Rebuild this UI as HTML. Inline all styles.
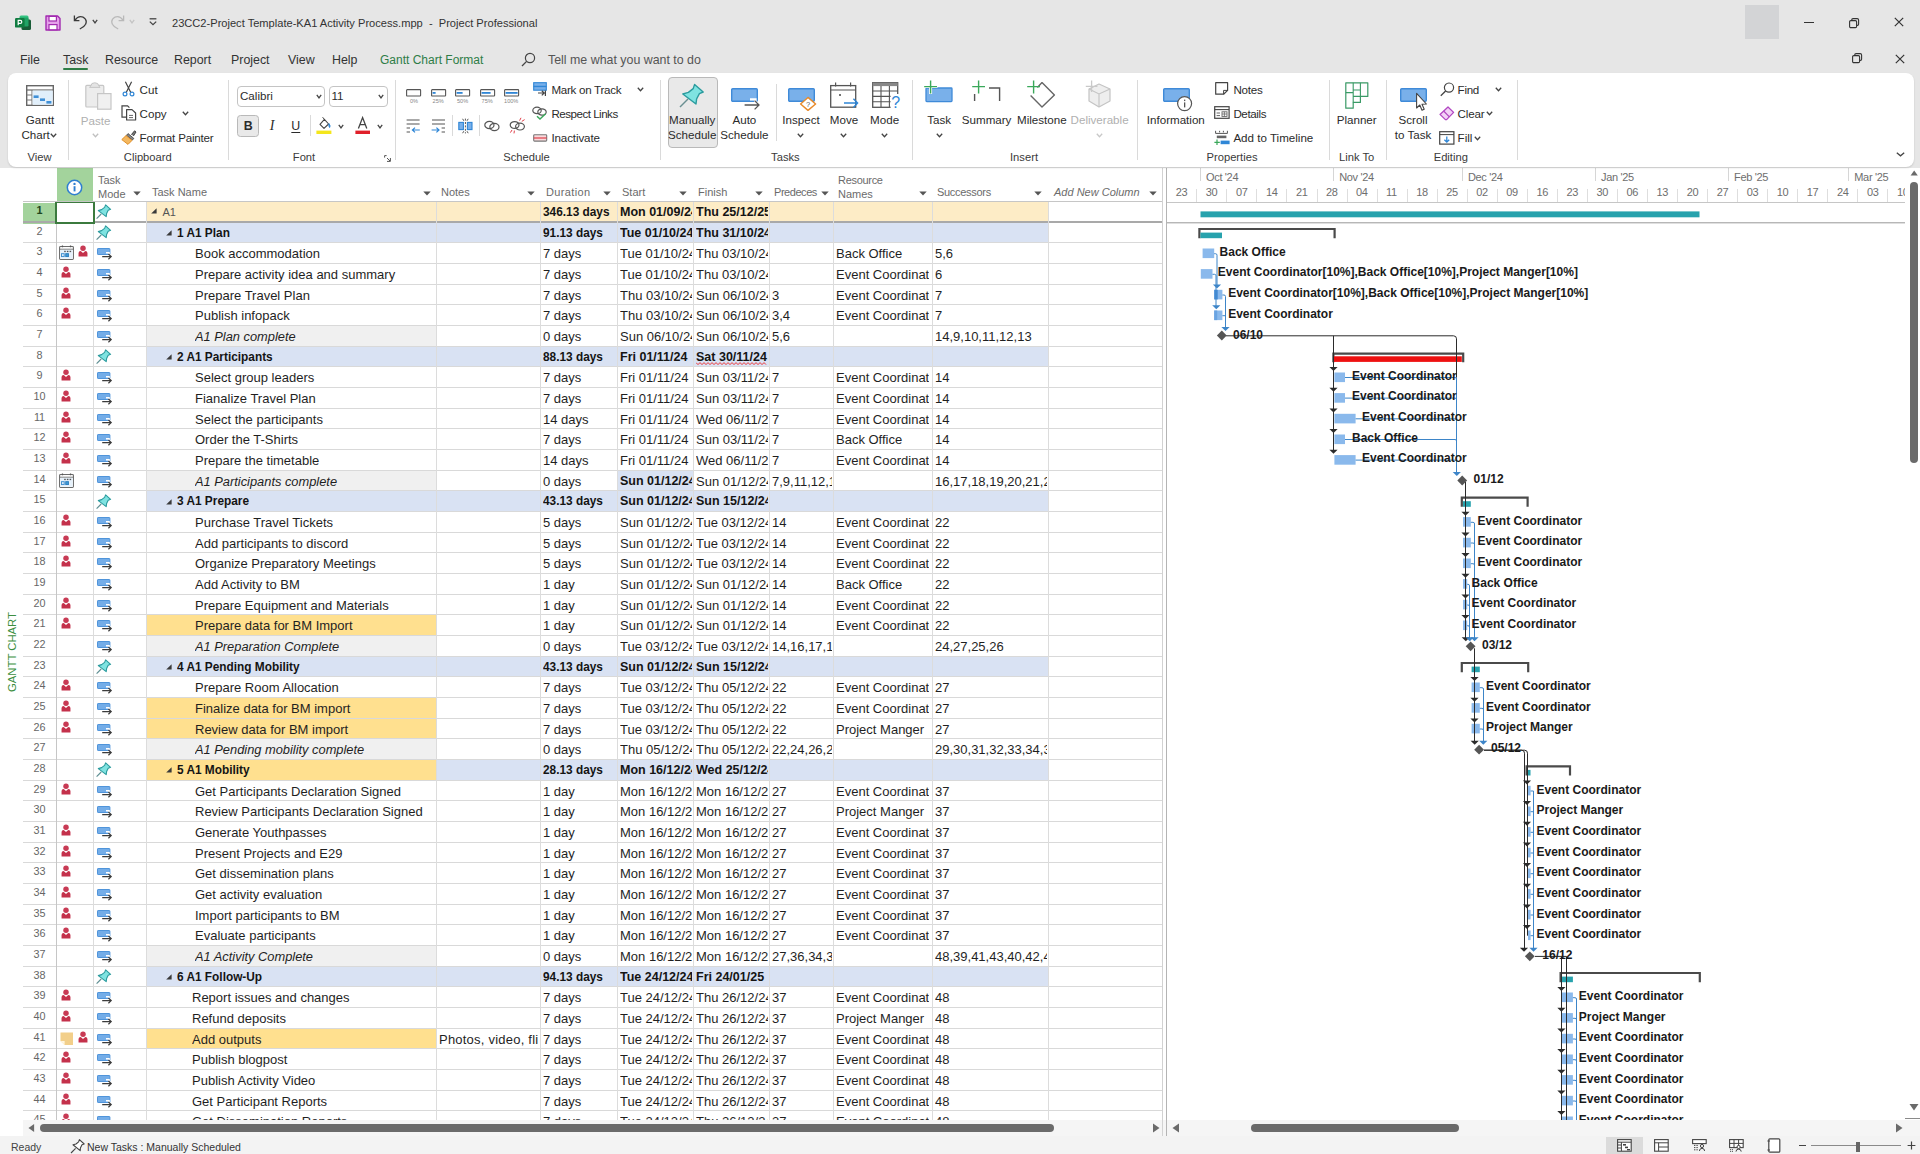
<!DOCTYPE html>
<html><head><meta charset="utf-8"><title>Project</title><style>
html,body{margin:0;padding:0}
body{width:1920px;height:1154px;overflow:hidden;position:relative;background:#fff;font-family:"Liberation Sans",sans-serif;color:#262626}
div,svg{box-sizing:border-box}
.abs,.bg,.ic,.c,.h,.hl,.vl,.ts,.t{position:absolute}
.c{height:20.67px;line-height:21.4px;font-size:13px;white-space:nowrap;overflow:hidden;color:#1f1f1f}
.c.b{font-weight:bold;font-size:11.85px;color:#141414}
.c.bd{font-weight:bold;font-size:12.5px;color:#141414}
.c.i{font-style:italic;font-size:12.85px}
.c.top{font-size:11px;color:#555}
.c.num{text-align:center;color:#666;font-size:10.8px;line-height:17.4px}
.h{font-size:11px;color:#6b6b6b;white-space:nowrap;line-height:14px}
.h.i{font-style:italic}
.hl{height:1px;background:#d9d9d9}
.vl{top:168px;width:1px;height:952px;background:#dcdcdc}
.ts{font-size:11px;color:#6e6e6e;white-space:nowrap;line-height:12px;letter-spacing:-0.35px}
.sq{text-decoration:underline wavy #e02020 1px;text-underline-offset:2px}
.t{white-space:nowrap;font-size:12px;color:#2b2b2b;line-height:14px}
.rl{position:absolute;font-size:11.6px;color:#2b2b2b;white-space:nowrap;line-height:14px}
.rc{position:absolute;font-size:11.6px;color:#2b2b2b;white-space:nowrap;line-height:14.6px;text-align:center;transform:translateX(-50%)}
.gl{position:absolute;font-size:11.2px;color:#3a3a3a;white-space:nowrap;line-height:13px;transform:translateX(-50%)}
.dis{color:#b0b0b0}
.sep{position:absolute;top:80px;width:1px;height:80px;background:#dadada}
</style></head>
<body>
<div class="bg" style="left:146px;top:202.0px;width:902px;height:20.667px;background:#fdecc6"></div>
<div class="bg" style="left:23px;top:203.0px;width:33px;height:20.667px;background:#a3d39c"></div>
<div class="c num" style="left:23px;top:202.0px;width:33px;color:#1e4620;font-weight:bold">1</div>
<svg class="ic" style="left:96px;top:204.2px" width="16" height="16" viewBox="0 0 16 16"><path d="M0.6 14.6 L5.2 10" stroke="#5f8f93" stroke-width="1.2" fill="none"/><path d="M9.6 0.9 L14.6 5.3 L12.2 6.3 L10.6 9.6 L10.2 12.6 L2.3 6.6 L5.6 5.6 L8.6 3.4 Z" fill="#7fe3e1" stroke="#2b9b9e" stroke-width="1.1" stroke-linejoin="round"/></svg>
<svg class="ic" style="left:150.6px;top:208.0px" width="6" height="6" viewBox="0 0 6 6"><path d="M5.6 0.2 V5.6 H0.2 Z" fill="#3a3a3a"/></svg>
<div class="c top" style="left:162.4px;top:202.0px;width:272.6px">A1</div>
<div class="c b" style="left:543px;top:202.0px;width:73px">346.13 days</div>
<div class="c bd" style="left:620px;top:202.0px;width:72px">Mon 01/09/24</div>
<div class="c bd" style="left:696px;top:202.0px;width:72px">Thu 25/12/25</div>
<div class="bg" style="left:146px;top:222.67px;width:902px;height:20.667px;background:#d9e2f3"></div>
<div class="bg" style="left:94px;top:223.67px;width:52px;height:18.667px;background:#fff"></div>
<div class="c num" style="left:23px;top:222.67px;width:33px">2</div>
<svg class="ic" style="left:96px;top:224.9px" width="16" height="16" viewBox="0 0 16 16"><path d="M0.6 14.6 L5.2 10" stroke="#5f8f93" stroke-width="1.2" fill="none"/><path d="M9.6 0.9 L14.6 5.3 L12.2 6.3 L10.6 9.6 L10.2 12.6 L2.3 6.6 L5.6 5.6 L8.6 3.4 Z" fill="#7fe3e1" stroke="#2b9b9e" stroke-width="1.1" stroke-linejoin="round"/></svg>
<svg class="ic" style="left:165.6px;top:229.9px" width="6" height="6" viewBox="0 0 6 6"><path d="M5.6 0.2 V5.6 H0.2 Z" fill="#3a3a3a"/></svg>
<div class="c b" style="left:177px;top:222.67px;width:258px">1 A1 Plan</div>
<div class="c b" style="left:543px;top:222.67px;width:73px">91.13 days</div>
<div class="c bd" style="left:620px;top:222.67px;width:72px">Tue 01/10/24</div>
<div class="c bd" style="left:696px;top:222.67px;width:72px">Thu 31/10/24</div>
<div class="c num" style="left:23px;top:243.33px;width:33px">3</div>
<svg class="ic" style="left:58.6px;top:245.1px" width="15.4" height="15.4" viewBox="0 0 16 16"><rect x="0.6" y="1.6" width="14.4" height="13.4" rx="1" fill="#fff" stroke="#6a6a6a" stroke-width="1.1"/><path d="M0.6 4.4 H15" stroke="#6a6a6a" stroke-width="1"/><path d="M3.6 0.4 V2.4 M12 0.4 V2.4" stroke="#555" stroke-width="1.3"/><rect x="1.4" y="5" width="12.8" height="9.2" fill="#e6f1fb"/><rect x="5.4" y="6" width="1.6" height="1.4" fill="#555"/><rect x="8.2" y="6" width="1.6" height="1.4" fill="#555"/><rect x="11" y="6" width="1.6" height="1.4" fill="#555"/><rect x="2.6" y="9" width="2.8" height="3" fill="#dbeaf8" stroke="#3f8fd0" stroke-width="1"/><rect x="7" y="9" width="2.8" height="3" fill="#3f9ad6" stroke="#2c7fc0" stroke-width="1"/></svg>
<svg class="ic" style="left:78px;top:245.3px" width="10" height="12.4" viewBox="0 0 11 13"><circle cx="5.5" cy="3.2" r="3" fill="#c83a54"/><path d="M0.6 12.4 L0.6 8.6 Q0.6 6.6 3 6.4 L5.5 8.6 L8 6.4 Q10.4 6.6 10.4 8.6 L10.4 12.4 Z" fill="#c4314b"/></svg>
<svg class="ic" style="left:97px;top:248.1px" width="16" height="12" viewBox="0 0 16 12"><rect x="0.5" y="0.5" width="12.4" height="6" rx="0.6" fill="#74ade8" stroke="#4f94da" stroke-width="1"/><path d="M9 4.8 L12 4.8 L12 6.4" fill="none" stroke="#fff" stroke-width="1.5"/><path d="M5.2 8.6 L14 8.6 M11.4 6 L14.2 8.6 L11.4 11.2" fill="none" stroke="#3b3b3b" stroke-width="1.2"/></svg>

<div class="c " style="left:195px;top:243.33px;width:240px">Book accommodation</div>
<div class="c" style="left:543px;top:243.33px;width:73px">7 days</div>
<div class="c" style="left:620px;top:243.33px;width:72px">Tue 01/10/24</div>
<div class="c" style="left:696px;top:243.33px;width:72px">Thu 03/10/24</div>
<div class="c" style="left:836px;top:243.33px;width:92.8px">Back Office</div>
<div class="c" style="left:935px;top:243.33px;width:112px">5,6</div>
<div class="c num" style="left:23px;top:264.0px;width:33px">4</div>
<svg class="ic" style="left:61px;top:266.0px" width="10" height="12.4" viewBox="0 0 11 13"><circle cx="5.5" cy="3.2" r="3" fill="#c83a54"/><path d="M0.6 12.4 L0.6 8.6 Q0.6 6.6 3 6.4 L5.5 8.6 L8 6.4 Q10.4 6.6 10.4 8.6 L10.4 12.4 Z" fill="#c4314b"/></svg>
<svg class="ic" style="left:97px;top:268.8px" width="16" height="12" viewBox="0 0 16 12"><rect x="0.5" y="0.5" width="12.4" height="6" rx="0.6" fill="#74ade8" stroke="#4f94da" stroke-width="1"/><path d="M9 4.8 L12 4.8 L12 6.4" fill="none" stroke="#fff" stroke-width="1.5"/><path d="M5.2 8.6 L14 8.6 M11.4 6 L14.2 8.6 L11.4 11.2" fill="none" stroke="#3b3b3b" stroke-width="1.2"/></svg>

<div class="c " style="left:195px;top:264.0px;width:240px">Prepare activity idea and summary</div>
<div class="c" style="left:543px;top:264.0px;width:73px">7 days</div>
<div class="c" style="left:620px;top:264.0px;width:72px">Tue 01/10/24</div>
<div class="c" style="left:696px;top:264.0px;width:72px">Thu 03/10/24</div>
<div class="c" style="left:836px;top:264.0px;width:92.8px">Event Coordinator</div>
<div class="c" style="left:935px;top:264.0px;width:112px">6</div>
<div class="c num" style="left:23px;top:284.67px;width:33px">5</div>
<svg class="ic" style="left:61px;top:286.7px" width="10" height="12.4" viewBox="0 0 11 13"><circle cx="5.5" cy="3.2" r="3" fill="#c83a54"/><path d="M0.6 12.4 L0.6 8.6 Q0.6 6.6 3 6.4 L5.5 8.6 L8 6.4 Q10.4 6.6 10.4 8.6 L10.4 12.4 Z" fill="#c4314b"/></svg>
<svg class="ic" style="left:97px;top:289.5px" width="16" height="12" viewBox="0 0 16 12"><rect x="0.5" y="0.5" width="12.4" height="6" rx="0.6" fill="#74ade8" stroke="#4f94da" stroke-width="1"/><path d="M9 4.8 L12 4.8 L12 6.4" fill="none" stroke="#fff" stroke-width="1.5"/><path d="M5.2 8.6 L14 8.6 M11.4 6 L14.2 8.6 L11.4 11.2" fill="none" stroke="#3b3b3b" stroke-width="1.2"/></svg>

<div class="c " style="left:195px;top:284.67px;width:240px">Prepare Travel Plan</div>
<div class="c" style="left:543px;top:284.67px;width:73px">7 days</div>
<div class="c" style="left:620px;top:284.67px;width:72px">Thu 03/10/24</div>
<div class="c" style="left:696px;top:284.67px;width:72px">Sun 06/10/24</div>
<div class="c" style="left:772px;top:284.67px;width:60px">3</div>
<div class="c" style="left:836px;top:284.67px;width:92.8px">Event Coordinator</div>
<div class="c" style="left:935px;top:284.67px;width:112px">7</div>
<div class="c num" style="left:23px;top:305.34px;width:33px">6</div>
<svg class="ic" style="left:61px;top:307.3px" width="10" height="12.4" viewBox="0 0 11 13"><circle cx="5.5" cy="3.2" r="3" fill="#c83a54"/><path d="M0.6 12.4 L0.6 8.6 Q0.6 6.6 3 6.4 L5.5 8.6 L8 6.4 Q10.4 6.6 10.4 8.6 L10.4 12.4 Z" fill="#c4314b"/></svg>
<svg class="ic" style="left:97px;top:310.1px" width="16" height="12" viewBox="0 0 16 12"><rect x="0.5" y="0.5" width="12.4" height="6" rx="0.6" fill="#74ade8" stroke="#4f94da" stroke-width="1"/><path d="M9 4.8 L12 4.8 L12 6.4" fill="none" stroke="#fff" stroke-width="1.5"/><path d="M5.2 8.6 L14 8.6 M11.4 6 L14.2 8.6 L11.4 11.2" fill="none" stroke="#3b3b3b" stroke-width="1.2"/></svg>

<div class="c " style="left:195px;top:305.34px;width:240px">Publish infopack</div>
<div class="c" style="left:543px;top:305.34px;width:73px">7 days</div>
<div class="c" style="left:620px;top:305.34px;width:72px">Thu 03/10/24</div>
<div class="c" style="left:696px;top:305.34px;width:72px">Sun 06/10/24</div>
<div class="c" style="left:772px;top:305.34px;width:60px">3,4</div>
<div class="c" style="left:836px;top:305.34px;width:92.8px">Event Coordinator</div>
<div class="c" style="left:935px;top:305.34px;width:112px">7</div>
<div class="bg" style="left:146px;top:326.0px;width:290px;height:20.667px;background:#f0f0f0"></div>
<div class="c num" style="left:23px;top:326.0px;width:33px">7</div>
<svg class="ic" style="left:97px;top:330.8px" width="16" height="12" viewBox="0 0 16 12"><rect x="0.5" y="0.5" width="12.4" height="6" rx="0.6" fill="#74ade8" stroke="#4f94da" stroke-width="1"/><path d="M9 4.8 L12 4.8 L12 6.4" fill="none" stroke="#fff" stroke-width="1.5"/><path d="M5.2 8.6 L14 8.6 M11.4 6 L14.2 8.6 L11.4 11.2" fill="none" stroke="#3b3b3b" stroke-width="1.2"/></svg>

<div class="c i" style="left:195px;top:326.0px;width:240px">A1 Plan complete</div>
<div class="c" style="left:543px;top:326.0px;width:73px">0 days</div>
<div class="c" style="left:620px;top:326.0px;width:72px">Sun 06/10/24</div>
<div class="c" style="left:696px;top:326.0px;width:72px">Sun 06/10/24</div>
<div class="c" style="left:772px;top:326.0px;width:60px">5,6</div>
<div class="c" style="left:935px;top:326.0px;width:112px">14,9,10,11,12,13</div>
<div class="bg" style="left:146px;top:346.67px;width:902px;height:20.667px;background:#d9e2f3"></div>
<div class="bg" style="left:94px;top:347.67px;width:52px;height:18.667px;background:#fff"></div>
<div class="c num" style="left:23px;top:346.67px;width:33px">8</div>
<svg class="ic" style="left:96px;top:348.9px" width="16" height="16" viewBox="0 0 16 16"><path d="M0.6 14.6 L5.2 10" stroke="#5f8f93" stroke-width="1.2" fill="none"/><path d="M9.6 0.9 L14.6 5.3 L12.2 6.3 L10.6 9.6 L10.2 12.6 L2.3 6.6 L5.6 5.6 L8.6 3.4 Z" fill="#7fe3e1" stroke="#2b9b9e" stroke-width="1.1" stroke-linejoin="round"/></svg>
<svg class="ic" style="left:165.6px;top:353.9px" width="6" height="6" viewBox="0 0 6 6"><path d="M5.6 0.2 V5.6 H0.2 Z" fill="#3a3a3a"/></svg>
<div class="c b" style="left:177px;top:346.67px;width:258px">2 A1 Participants</div>
<div class="c b" style="left:543px;top:346.67px;width:73px">88.13 days</div>
<div class="c bd" style="left:620px;top:346.67px;width:72px">Fri 01/11/24</div>
<div class="c bd" style="left:696px;top:346.67px;width:72px">Sat 30/11/24</div>
<svg class="ic" style="left:696px;top:361.5px" width="71" height="4" viewBox="0 0 71 4"><path d="M0 0.6 L2 2.6 L4 0.6 L6 2.6 L8 0.6 L10 2.6 L12 0.6 L14 2.6 L16 0.6 L18 2.6 L20 0.6 L22 2.6 L24 0.6 L26 2.6 L28 0.6 L30 2.6 L32 0.6 L34 2.6 L36 0.6 L38 2.6 L40 0.6 L42 2.6 L44 0.6 L46 2.6 L48 0.6 L50 2.6 L52 0.6 L54 2.6 L56 0.6 L58 2.6 L60 0.6 L62 2.6 L64 0.6 L66 2.6 L68 0.6 L70 2.6" fill="none" stroke="#e22" stroke-width="0.9"/></svg>
<div class="c num" style="left:23px;top:367.34px;width:33px">9</div>
<svg class="ic" style="left:61px;top:369.3px" width="10" height="12.4" viewBox="0 0 11 13"><circle cx="5.5" cy="3.2" r="3" fill="#c83a54"/><path d="M0.6 12.4 L0.6 8.6 Q0.6 6.6 3 6.4 L5.5 8.6 L8 6.4 Q10.4 6.6 10.4 8.6 L10.4 12.4 Z" fill="#c4314b"/></svg>
<svg class="ic" style="left:97px;top:372.1px" width="16" height="12" viewBox="0 0 16 12"><rect x="0.5" y="0.5" width="12.4" height="6" rx="0.6" fill="#74ade8" stroke="#4f94da" stroke-width="1"/><path d="M9 4.8 L12 4.8 L12 6.4" fill="none" stroke="#fff" stroke-width="1.5"/><path d="M5.2 8.6 L14 8.6 M11.4 6 L14.2 8.6 L11.4 11.2" fill="none" stroke="#3b3b3b" stroke-width="1.2"/></svg>

<div class="c " style="left:195px;top:367.34px;width:240px">Select group leaders</div>
<div class="c" style="left:543px;top:367.34px;width:73px">7 days</div>
<div class="c" style="left:620px;top:367.34px;width:72px">Fri 01/11/24</div>
<div class="c" style="left:696px;top:367.34px;width:72px">Sun 03/11/24</div>
<div class="c" style="left:772px;top:367.34px;width:60px">7</div>
<div class="c" style="left:836px;top:367.34px;width:92.8px">Event Coordinator</div>
<div class="c" style="left:935px;top:367.34px;width:112px">14</div>
<div class="c num" style="left:23px;top:388.0px;width:33px">10</div>
<svg class="ic" style="left:61px;top:390.0px" width="10" height="12.4" viewBox="0 0 11 13"><circle cx="5.5" cy="3.2" r="3" fill="#c83a54"/><path d="M0.6 12.4 L0.6 8.6 Q0.6 6.6 3 6.4 L5.5 8.6 L8 6.4 Q10.4 6.6 10.4 8.6 L10.4 12.4 Z" fill="#c4314b"/></svg>
<svg class="ic" style="left:97px;top:392.8px" width="16" height="12" viewBox="0 0 16 12"><rect x="0.5" y="0.5" width="12.4" height="6" rx="0.6" fill="#74ade8" stroke="#4f94da" stroke-width="1"/><path d="M9 4.8 L12 4.8 L12 6.4" fill="none" stroke="#fff" stroke-width="1.5"/><path d="M5.2 8.6 L14 8.6 M11.4 6 L14.2 8.6 L11.4 11.2" fill="none" stroke="#3b3b3b" stroke-width="1.2"/></svg>

<div class="c " style="left:195px;top:388.0px;width:240px">Fianalize Travel Plan</div>
<div class="c" style="left:543px;top:388.0px;width:73px">7 days</div>
<div class="c" style="left:620px;top:388.0px;width:72px">Fri 01/11/24</div>
<div class="c" style="left:696px;top:388.0px;width:72px">Sun 03/11/24</div>
<div class="c" style="left:772px;top:388.0px;width:60px">7</div>
<div class="c" style="left:836px;top:388.0px;width:92.8px">Event Coordinator</div>
<div class="c" style="left:935px;top:388.0px;width:112px">14</div>
<div class="c num" style="left:23px;top:408.67px;width:33px">11</div>
<svg class="ic" style="left:61px;top:410.7px" width="10" height="12.4" viewBox="0 0 11 13"><circle cx="5.5" cy="3.2" r="3" fill="#c83a54"/><path d="M0.6 12.4 L0.6 8.6 Q0.6 6.6 3 6.4 L5.5 8.6 L8 6.4 Q10.4 6.6 10.4 8.6 L10.4 12.4 Z" fill="#c4314b"/></svg>
<svg class="ic" style="left:97px;top:413.5px" width="16" height="12" viewBox="0 0 16 12"><rect x="0.5" y="0.5" width="12.4" height="6" rx="0.6" fill="#74ade8" stroke="#4f94da" stroke-width="1"/><path d="M9 4.8 L12 4.8 L12 6.4" fill="none" stroke="#fff" stroke-width="1.5"/><path d="M5.2 8.6 L14 8.6 M11.4 6 L14.2 8.6 L11.4 11.2" fill="none" stroke="#3b3b3b" stroke-width="1.2"/></svg>

<div class="c " style="left:195px;top:408.67px;width:240px">Select the participants</div>
<div class="c" style="left:543px;top:408.67px;width:73px">14 days</div>
<div class="c" style="left:620px;top:408.67px;width:72px">Fri 01/11/24</div>
<div class="c" style="left:696px;top:408.67px;width:72px">Wed 06/11/24</div>
<div class="c" style="left:772px;top:408.67px;width:60px">7</div>
<div class="c" style="left:836px;top:408.67px;width:92.8px">Event Coordinator</div>
<div class="c" style="left:935px;top:408.67px;width:112px">14</div>
<div class="c num" style="left:23px;top:429.34px;width:33px">12</div>
<svg class="ic" style="left:61px;top:431.3px" width="10" height="12.4" viewBox="0 0 11 13"><circle cx="5.5" cy="3.2" r="3" fill="#c83a54"/><path d="M0.6 12.4 L0.6 8.6 Q0.6 6.6 3 6.4 L5.5 8.6 L8 6.4 Q10.4 6.6 10.4 8.6 L10.4 12.4 Z" fill="#c4314b"/></svg>
<svg class="ic" style="left:97px;top:434.1px" width="16" height="12" viewBox="0 0 16 12"><rect x="0.5" y="0.5" width="12.4" height="6" rx="0.6" fill="#74ade8" stroke="#4f94da" stroke-width="1"/><path d="M9 4.8 L12 4.8 L12 6.4" fill="none" stroke="#fff" stroke-width="1.5"/><path d="M5.2 8.6 L14 8.6 M11.4 6 L14.2 8.6 L11.4 11.2" fill="none" stroke="#3b3b3b" stroke-width="1.2"/></svg>

<div class="c " style="left:195px;top:429.34px;width:240px">Order the T-Shirts</div>
<div class="c" style="left:543px;top:429.34px;width:73px">7 days</div>
<div class="c" style="left:620px;top:429.34px;width:72px">Fri 01/11/24</div>
<div class="c" style="left:696px;top:429.34px;width:72px">Sun 03/11/24</div>
<div class="c" style="left:772px;top:429.34px;width:60px">7</div>
<div class="c" style="left:836px;top:429.34px;width:92.8px">Back Office</div>
<div class="c" style="left:935px;top:429.34px;width:112px">14</div>
<div class="c num" style="left:23px;top:450.0px;width:33px">13</div>
<svg class="ic" style="left:61px;top:452.0px" width="10" height="12.4" viewBox="0 0 11 13"><circle cx="5.5" cy="3.2" r="3" fill="#c83a54"/><path d="M0.6 12.4 L0.6 8.6 Q0.6 6.6 3 6.4 L5.5 8.6 L8 6.4 Q10.4 6.6 10.4 8.6 L10.4 12.4 Z" fill="#c4314b"/></svg>
<svg class="ic" style="left:97px;top:454.8px" width="16" height="12" viewBox="0 0 16 12"><rect x="0.5" y="0.5" width="12.4" height="6" rx="0.6" fill="#74ade8" stroke="#4f94da" stroke-width="1"/><path d="M9 4.8 L12 4.8 L12 6.4" fill="none" stroke="#fff" stroke-width="1.5"/><path d="M5.2 8.6 L14 8.6 M11.4 6 L14.2 8.6 L11.4 11.2" fill="none" stroke="#3b3b3b" stroke-width="1.2"/></svg>

<div class="c " style="left:195px;top:450.0px;width:240px">Prepare the timetable</div>
<div class="c" style="left:543px;top:450.0px;width:73px">14 days</div>
<div class="c" style="left:620px;top:450.0px;width:72px">Fri 01/11/24</div>
<div class="c" style="left:696px;top:450.0px;width:72px">Wed 06/11/24</div>
<div class="c" style="left:772px;top:450.0px;width:60px">7</div>
<div class="c" style="left:836px;top:450.0px;width:92.8px">Event Coordinator</div>
<div class="c" style="left:935px;top:450.0px;width:112px">14</div>
<div class="bg" style="left:146px;top:470.67px;width:290px;height:20.667px;background:#f0f0f0"></div>
<div class="bg" style="left:617px;top:470.67px;width:76px;height:20.667px;background:#d9e2f3"></div>
<div class="c num" style="left:23px;top:470.67px;width:33px">14</div>
<svg class="ic" style="left:58.6px;top:472.5px" width="15.4" height="15.4" viewBox="0 0 16 16"><rect x="0.6" y="1.6" width="14.4" height="13.4" rx="1" fill="#fff" stroke="#6a6a6a" stroke-width="1.1"/><path d="M0.6 4.4 H15" stroke="#6a6a6a" stroke-width="1"/><path d="M3.6 0.4 V2.4 M12 0.4 V2.4" stroke="#555" stroke-width="1.3"/><rect x="1.4" y="5" width="12.8" height="9.2" fill="#e6f1fb"/><rect x="5.4" y="6" width="1.6" height="1.4" fill="#555"/><rect x="8.2" y="6" width="1.6" height="1.4" fill="#555"/><rect x="11" y="6" width="1.6" height="1.4" fill="#555"/><rect x="2.6" y="9" width="2.8" height="3" fill="#dbeaf8" stroke="#3f8fd0" stroke-width="1"/><rect x="7" y="9" width="2.8" height="3" fill="#3f9ad6" stroke="#2c7fc0" stroke-width="1"/></svg>
<svg class="ic" style="left:97px;top:475.5px" width="16" height="12" viewBox="0 0 16 12"><rect x="0.5" y="0.5" width="12.4" height="6" rx="0.6" fill="#74ade8" stroke="#4f94da" stroke-width="1"/><path d="M9 4.8 L12 4.8 L12 6.4" fill="none" stroke="#fff" stroke-width="1.5"/><path d="M5.2 8.6 L14 8.6 M11.4 6 L14.2 8.6 L11.4 11.2" fill="none" stroke="#3b3b3b" stroke-width="1.2"/></svg>

<div class="c i" style="left:195px;top:470.67px;width:240px">A1 Participants complete</div>
<div class="c" style="left:543px;top:470.67px;width:73px">0 days</div>
<div class="c bd" style="left:620px;top:470.67px;width:72px">Sun 01/12/24</div>
<div class="c" style="left:696px;top:470.67px;width:72px">Sun 01/12/24</div>
<div class="c" style="left:772px;top:470.67px;width:60px">7,9,11,12,13</div>
<div class="c" style="left:935px;top:470.67px;width:112px">16,17,18,19,20,21,22</div>
<div class="bg" style="left:146px;top:491.34px;width:902px;height:20.667px;background:#d9e2f3"></div>
<div class="bg" style="left:94px;top:492.34px;width:52px;height:18.667px;background:#fff"></div>
<div class="c num" style="left:23px;top:491.34px;width:33px">15</div>
<svg class="ic" style="left:96px;top:493.5px" width="16" height="16" viewBox="0 0 16 16"><path d="M0.6 14.6 L5.2 10" stroke="#5f8f93" stroke-width="1.2" fill="none"/><path d="M9.6 0.9 L14.6 5.3 L12.2 6.3 L10.6 9.6 L10.2 12.6 L2.3 6.6 L5.6 5.6 L8.6 3.4 Z" fill="#7fe3e1" stroke="#2b9b9e" stroke-width="1.1" stroke-linejoin="round"/></svg>
<svg class="ic" style="left:165.6px;top:498.5px" width="6" height="6" viewBox="0 0 6 6"><path d="M5.6 0.2 V5.6 H0.2 Z" fill="#3a3a3a"/></svg>
<div class="c b" style="left:177px;top:491.34px;width:258px">3 A1 Prepare</div>
<div class="c b" style="left:543px;top:491.34px;width:73px">43.13 days</div>
<div class="c bd" style="left:620px;top:491.34px;width:72px">Sun 01/12/24</div>
<div class="c bd" style="left:696px;top:491.34px;width:72px">Sun 15/12/24</div>
<div class="c num" style="left:23px;top:512.0px;width:33px">16</div>
<svg class="ic" style="left:61px;top:514.0px" width="10" height="12.4" viewBox="0 0 11 13"><circle cx="5.5" cy="3.2" r="3" fill="#c83a54"/><path d="M0.6 12.4 L0.6 8.6 Q0.6 6.6 3 6.4 L5.5 8.6 L8 6.4 Q10.4 6.6 10.4 8.6 L10.4 12.4 Z" fill="#c4314b"/></svg>
<svg class="ic" style="left:97px;top:516.8px" width="16" height="12" viewBox="0 0 16 12"><rect x="0.5" y="0.5" width="12.4" height="6" rx="0.6" fill="#74ade8" stroke="#4f94da" stroke-width="1"/><path d="M9 4.8 L12 4.8 L12 6.4" fill="none" stroke="#fff" stroke-width="1.5"/><path d="M5.2 8.6 L14 8.6 M11.4 6 L14.2 8.6 L11.4 11.2" fill="none" stroke="#3b3b3b" stroke-width="1.2"/></svg>

<div class="c " style="left:195px;top:512.0px;width:240px">Purchase Travel Tickets</div>
<div class="c" style="left:543px;top:512.0px;width:73px">5 days</div>
<div class="c" style="left:620px;top:512.0px;width:72px">Sun 01/12/24</div>
<div class="c" style="left:696px;top:512.0px;width:72px">Tue 03/12/24</div>
<div class="c" style="left:772px;top:512.0px;width:60px">14</div>
<div class="c" style="left:836px;top:512.0px;width:92.8px">Event Coordinator</div>
<div class="c" style="left:935px;top:512.0px;width:112px">22</div>
<div class="c num" style="left:23px;top:532.67px;width:33px">17</div>
<svg class="ic" style="left:61px;top:534.7px" width="10" height="12.4" viewBox="0 0 11 13"><circle cx="5.5" cy="3.2" r="3" fill="#c83a54"/><path d="M0.6 12.4 L0.6 8.6 Q0.6 6.6 3 6.4 L5.5 8.6 L8 6.4 Q10.4 6.6 10.4 8.6 L10.4 12.4 Z" fill="#c4314b"/></svg>
<svg class="ic" style="left:97px;top:537.5px" width="16" height="12" viewBox="0 0 16 12"><rect x="0.5" y="0.5" width="12.4" height="6" rx="0.6" fill="#74ade8" stroke="#4f94da" stroke-width="1"/><path d="M9 4.8 L12 4.8 L12 6.4" fill="none" stroke="#fff" stroke-width="1.5"/><path d="M5.2 8.6 L14 8.6 M11.4 6 L14.2 8.6 L11.4 11.2" fill="none" stroke="#3b3b3b" stroke-width="1.2"/></svg>

<div class="c " style="left:195px;top:532.67px;width:240px">Add participants to discord</div>
<div class="c" style="left:543px;top:532.67px;width:73px">5 days</div>
<div class="c" style="left:620px;top:532.67px;width:72px">Sun 01/12/24</div>
<div class="c" style="left:696px;top:532.67px;width:72px">Tue 03/12/24</div>
<div class="c" style="left:772px;top:532.67px;width:60px">14</div>
<div class="c" style="left:836px;top:532.67px;width:92.8px">Event Coordinator</div>
<div class="c" style="left:935px;top:532.67px;width:112px">22</div>
<div class="c num" style="left:23px;top:553.34px;width:33px">18</div>
<svg class="ic" style="left:61px;top:555.3px" width="10" height="12.4" viewBox="0 0 11 13"><circle cx="5.5" cy="3.2" r="3" fill="#c83a54"/><path d="M0.6 12.4 L0.6 8.6 Q0.6 6.6 3 6.4 L5.5 8.6 L8 6.4 Q10.4 6.6 10.4 8.6 L10.4 12.4 Z" fill="#c4314b"/></svg>
<svg class="ic" style="left:97px;top:558.1px" width="16" height="12" viewBox="0 0 16 12"><rect x="0.5" y="0.5" width="12.4" height="6" rx="0.6" fill="#74ade8" stroke="#4f94da" stroke-width="1"/><path d="M9 4.8 L12 4.8 L12 6.4" fill="none" stroke="#fff" stroke-width="1.5"/><path d="M5.2 8.6 L14 8.6 M11.4 6 L14.2 8.6 L11.4 11.2" fill="none" stroke="#3b3b3b" stroke-width="1.2"/></svg>

<div class="c " style="left:195px;top:553.34px;width:240px">Organize Preparatory Meetings</div>
<div class="c" style="left:543px;top:553.34px;width:73px">5 days</div>
<div class="c" style="left:620px;top:553.34px;width:72px">Sun 01/12/24</div>
<div class="c" style="left:696px;top:553.34px;width:72px">Tue 03/12/24</div>
<div class="c" style="left:772px;top:553.34px;width:60px">14</div>
<div class="c" style="left:836px;top:553.34px;width:92.8px">Event Coordinator</div>
<div class="c" style="left:935px;top:553.34px;width:112px">22</div>
<div class="c num" style="left:23px;top:574.01px;width:33px">19</div>
<svg class="ic" style="left:97px;top:578.8px" width="16" height="12" viewBox="0 0 16 12"><rect x="0.5" y="0.5" width="12.4" height="6" rx="0.6" fill="#74ade8" stroke="#4f94da" stroke-width="1"/><path d="M9 4.8 L12 4.8 L12 6.4" fill="none" stroke="#fff" stroke-width="1.5"/><path d="M5.2 8.6 L14 8.6 M11.4 6 L14.2 8.6 L11.4 11.2" fill="none" stroke="#3b3b3b" stroke-width="1.2"/></svg>

<div class="c " style="left:195px;top:574.01px;width:240px">Add Activity to BM</div>
<div class="c" style="left:543px;top:574.01px;width:73px">1 day</div>
<div class="c" style="left:620px;top:574.01px;width:72px">Sun 01/12/24</div>
<div class="c" style="left:696px;top:574.01px;width:72px">Sun 01/12/24</div>
<div class="c" style="left:772px;top:574.01px;width:60px">14</div>
<div class="c" style="left:836px;top:574.01px;width:92.8px">Back Office</div>
<div class="c" style="left:935px;top:574.01px;width:112px">22</div>
<div class="c num" style="left:23px;top:594.67px;width:33px">20</div>
<svg class="ic" style="left:61px;top:596.7px" width="10" height="12.4" viewBox="0 0 11 13"><circle cx="5.5" cy="3.2" r="3" fill="#c83a54"/><path d="M0.6 12.4 L0.6 8.6 Q0.6 6.6 3 6.4 L5.5 8.6 L8 6.4 Q10.4 6.6 10.4 8.6 L10.4 12.4 Z" fill="#c4314b"/></svg>
<svg class="ic" style="left:97px;top:599.5px" width="16" height="12" viewBox="0 0 16 12"><rect x="0.5" y="0.5" width="12.4" height="6" rx="0.6" fill="#74ade8" stroke="#4f94da" stroke-width="1"/><path d="M9 4.8 L12 4.8 L12 6.4" fill="none" stroke="#fff" stroke-width="1.5"/><path d="M5.2 8.6 L14 8.6 M11.4 6 L14.2 8.6 L11.4 11.2" fill="none" stroke="#3b3b3b" stroke-width="1.2"/></svg>

<div class="c " style="left:195px;top:594.67px;width:240px">Prepare Equipment and Materials</div>
<div class="c" style="left:543px;top:594.67px;width:73px">1 day</div>
<div class="c" style="left:620px;top:594.67px;width:72px">Sun 01/12/24</div>
<div class="c" style="left:696px;top:594.67px;width:72px">Sun 01/12/24</div>
<div class="c" style="left:772px;top:594.67px;width:60px">14</div>
<div class="c" style="left:836px;top:594.67px;width:92.8px">Event Coordinator</div>
<div class="c" style="left:935px;top:594.67px;width:112px">22</div>
<div class="bg" style="left:146px;top:615.34px;width:290px;height:20.667px;background:#ffe08f"></div>
<div class="c num" style="left:23px;top:615.34px;width:33px">21</div>
<svg class="ic" style="left:61px;top:617.3px" width="10" height="12.4" viewBox="0 0 11 13"><circle cx="5.5" cy="3.2" r="3" fill="#c83a54"/><path d="M0.6 12.4 L0.6 8.6 Q0.6 6.6 3 6.4 L5.5 8.6 L8 6.4 Q10.4 6.6 10.4 8.6 L10.4 12.4 Z" fill="#c4314b"/></svg>
<svg class="ic" style="left:97px;top:620.1px" width="16" height="12" viewBox="0 0 16 12"><rect x="0.5" y="0.5" width="12.4" height="6" rx="0.6" fill="#74ade8" stroke="#4f94da" stroke-width="1"/><path d="M9 4.8 L12 4.8 L12 6.4" fill="none" stroke="#fff" stroke-width="1.5"/><path d="M5.2 8.6 L14 8.6 M11.4 6 L14.2 8.6 L11.4 11.2" fill="none" stroke="#3b3b3b" stroke-width="1.2"/></svg>

<div class="c " style="left:195px;top:615.34px;width:240px">Prepare data for BM Import</div>
<div class="c" style="left:543px;top:615.34px;width:73px">1 day</div>
<div class="c" style="left:620px;top:615.34px;width:72px">Sun 01/12/24</div>
<div class="c" style="left:696px;top:615.34px;width:72px">Sun 01/12/24</div>
<div class="c" style="left:772px;top:615.34px;width:60px">14</div>
<div class="c" style="left:836px;top:615.34px;width:92.8px">Event Coordinator</div>
<div class="c" style="left:935px;top:615.34px;width:112px">22</div>
<div class="bg" style="left:146px;top:636.01px;width:290px;height:20.667px;background:#f0f0f0"></div>
<div class="c num" style="left:23px;top:636.01px;width:33px">22</div>
<svg class="ic" style="left:97px;top:640.8px" width="16" height="12" viewBox="0 0 16 12"><rect x="0.5" y="0.5" width="12.4" height="6" rx="0.6" fill="#74ade8" stroke="#4f94da" stroke-width="1"/><path d="M9 4.8 L12 4.8 L12 6.4" fill="none" stroke="#fff" stroke-width="1.5"/><path d="M5.2 8.6 L14 8.6 M11.4 6 L14.2 8.6 L11.4 11.2" fill="none" stroke="#3b3b3b" stroke-width="1.2"/></svg>

<div class="c i" style="left:195px;top:636.01px;width:240px">A1 Preparation Complete</div>
<div class="c" style="left:543px;top:636.01px;width:73px">0 days</div>
<div class="c" style="left:620px;top:636.01px;width:72px">Tue 03/12/24</div>
<div class="c" style="left:696px;top:636.01px;width:72px">Tue 03/12/24</div>
<div class="c" style="left:772px;top:636.01px;width:60px">14,16,17,18,19</div>
<div class="c" style="left:935px;top:636.01px;width:112px">24,27,25,26</div>
<div class="bg" style="left:146px;top:656.67px;width:902px;height:20.667px;background:#d9e2f3"></div>
<div class="bg" style="left:94px;top:657.67px;width:52px;height:18.667px;background:#fff"></div>
<div class="c num" style="left:23px;top:656.67px;width:33px">23</div>
<svg class="ic" style="left:96px;top:658.9px" width="16" height="16" viewBox="0 0 16 16"><path d="M0.6 14.6 L5.2 10" stroke="#5f8f93" stroke-width="1.2" fill="none"/><path d="M9.6 0.9 L14.6 5.3 L12.2 6.3 L10.6 9.6 L10.2 12.6 L2.3 6.6 L5.6 5.6 L8.6 3.4 Z" fill="#7fe3e1" stroke="#2b9b9e" stroke-width="1.1" stroke-linejoin="round"/></svg>
<svg class="ic" style="left:165.6px;top:663.9px" width="6" height="6" viewBox="0 0 6 6"><path d="M5.6 0.2 V5.6 H0.2 Z" fill="#3a3a3a"/></svg>
<div class="c b" style="left:177px;top:656.67px;width:258px">4 A1 Pending Mobility</div>
<div class="c b" style="left:543px;top:656.67px;width:73px">43.13 days</div>
<div class="c bd" style="left:620px;top:656.67px;width:72px">Sun 01/12/24</div>
<div class="c bd" style="left:696px;top:656.67px;width:72px">Sun 15/12/24</div>
<div class="c num" style="left:23px;top:677.34px;width:33px">24</div>
<svg class="ic" style="left:61px;top:679.3px" width="10" height="12.4" viewBox="0 0 11 13"><circle cx="5.5" cy="3.2" r="3" fill="#c83a54"/><path d="M0.6 12.4 L0.6 8.6 Q0.6 6.6 3 6.4 L5.5 8.6 L8 6.4 Q10.4 6.6 10.4 8.6 L10.4 12.4 Z" fill="#c4314b"/></svg>
<svg class="ic" style="left:97px;top:682.1px" width="16" height="12" viewBox="0 0 16 12"><rect x="0.5" y="0.5" width="12.4" height="6" rx="0.6" fill="#74ade8" stroke="#4f94da" stroke-width="1"/><path d="M9 4.8 L12 4.8 L12 6.4" fill="none" stroke="#fff" stroke-width="1.5"/><path d="M5.2 8.6 L14 8.6 M11.4 6 L14.2 8.6 L11.4 11.2" fill="none" stroke="#3b3b3b" stroke-width="1.2"/></svg>

<div class="c " style="left:195px;top:677.34px;width:240px">Prepare Room Allocation</div>
<div class="c" style="left:543px;top:677.34px;width:73px">7 days</div>
<div class="c" style="left:620px;top:677.34px;width:72px">Tue 03/12/24</div>
<div class="c" style="left:696px;top:677.34px;width:72px">Thu 05/12/24</div>
<div class="c" style="left:772px;top:677.34px;width:60px">22</div>
<div class="c" style="left:836px;top:677.34px;width:92.8px">Event Coordinator</div>
<div class="c" style="left:935px;top:677.34px;width:112px">27</div>
<div class="bg" style="left:146px;top:698.01px;width:290px;height:20.667px;background:#ffe08f"></div>
<div class="c num" style="left:23px;top:698.01px;width:33px">25</div>
<svg class="ic" style="left:61px;top:700.0px" width="10" height="12.4" viewBox="0 0 11 13"><circle cx="5.5" cy="3.2" r="3" fill="#c83a54"/><path d="M0.6 12.4 L0.6 8.6 Q0.6 6.6 3 6.4 L5.5 8.6 L8 6.4 Q10.4 6.6 10.4 8.6 L10.4 12.4 Z" fill="#c4314b"/></svg>
<svg class="ic" style="left:97px;top:702.8px" width="16" height="12" viewBox="0 0 16 12"><rect x="0.5" y="0.5" width="12.4" height="6" rx="0.6" fill="#74ade8" stroke="#4f94da" stroke-width="1"/><path d="M9 4.8 L12 4.8 L12 6.4" fill="none" stroke="#fff" stroke-width="1.5"/><path d="M5.2 8.6 L14 8.6 M11.4 6 L14.2 8.6 L11.4 11.2" fill="none" stroke="#3b3b3b" stroke-width="1.2"/></svg>

<div class="c " style="left:195px;top:698.01px;width:240px">Finalize data for BM import</div>
<div class="c" style="left:543px;top:698.01px;width:73px">7 days</div>
<div class="c" style="left:620px;top:698.01px;width:72px">Tue 03/12/24</div>
<div class="c" style="left:696px;top:698.01px;width:72px">Thu 05/12/24</div>
<div class="c" style="left:772px;top:698.01px;width:60px">22</div>
<div class="c" style="left:836px;top:698.01px;width:92.8px">Event Coordinator</div>
<div class="c" style="left:935px;top:698.01px;width:112px">27</div>
<div class="bg" style="left:146px;top:718.68px;width:290px;height:20.667px;background:#ffe08f"></div>
<div class="c num" style="left:23px;top:718.68px;width:33px">26</div>
<svg class="ic" style="left:61px;top:720.7px" width="10" height="12.4" viewBox="0 0 11 13"><circle cx="5.5" cy="3.2" r="3" fill="#c83a54"/><path d="M0.6 12.4 L0.6 8.6 Q0.6 6.6 3 6.4 L5.5 8.6 L8 6.4 Q10.4 6.6 10.4 8.6 L10.4 12.4 Z" fill="#c4314b"/></svg>
<svg class="ic" style="left:97px;top:723.5px" width="16" height="12" viewBox="0 0 16 12"><rect x="0.5" y="0.5" width="12.4" height="6" rx="0.6" fill="#74ade8" stroke="#4f94da" stroke-width="1"/><path d="M9 4.8 L12 4.8 L12 6.4" fill="none" stroke="#fff" stroke-width="1.5"/><path d="M5.2 8.6 L14 8.6 M11.4 6 L14.2 8.6 L11.4 11.2" fill="none" stroke="#3b3b3b" stroke-width="1.2"/></svg>

<div class="c " style="left:195px;top:718.68px;width:240px">Review data for BM import</div>
<div class="c" style="left:543px;top:718.68px;width:73px">7 days</div>
<div class="c" style="left:620px;top:718.68px;width:72px">Tue 03/12/24</div>
<div class="c" style="left:696px;top:718.68px;width:72px">Thu 05/12/24</div>
<div class="c" style="left:772px;top:718.68px;width:60px">22</div>
<div class="c" style="left:836px;top:718.68px;width:92.8px">Project Manger</div>
<div class="c" style="left:935px;top:718.68px;width:112px">27</div>
<div class="bg" style="left:146px;top:739.34px;width:290px;height:20.667px;background:#f0f0f0"></div>
<div class="c num" style="left:23px;top:739.34px;width:33px">27</div>
<svg class="ic" style="left:97px;top:744.1px" width="16" height="12" viewBox="0 0 16 12"><rect x="0.5" y="0.5" width="12.4" height="6" rx="0.6" fill="#74ade8" stroke="#4f94da" stroke-width="1"/><path d="M9 4.8 L12 4.8 L12 6.4" fill="none" stroke="#fff" stroke-width="1.5"/><path d="M5.2 8.6 L14 8.6 M11.4 6 L14.2 8.6 L11.4 11.2" fill="none" stroke="#3b3b3b" stroke-width="1.2"/></svg>

<div class="c i" style="left:195px;top:739.34px;width:240px">A1 Pending mobility complete</div>
<div class="c" style="left:543px;top:739.34px;width:73px">0 days</div>
<div class="c" style="left:620px;top:739.34px;width:72px">Thu 05/12/24</div>
<div class="c" style="left:696px;top:739.34px;width:72px">Thu 05/12/24</div>
<div class="c" style="left:772px;top:739.34px;width:60px">22,24,26,25</div>
<div class="c" style="left:935px;top:739.34px;width:112px">29,30,31,32,33,34,35</div>
<div class="bg" style="left:146px;top:760.01px;width:902px;height:20.667px;background:#d9e2f3"></div>
<div class="bg" style="left:94px;top:761.01px;width:52px;height:18.667px;background:#fff"></div>
<div class="bg" style="left:146px;top:760.01px;width:290px;height:20.667px;background:#ffe08f"></div>
<div class="c num" style="left:23px;top:760.01px;width:33px">28</div>
<svg class="ic" style="left:96px;top:762.2px" width="16" height="16" viewBox="0 0 16 16"><path d="M0.6 14.6 L5.2 10" stroke="#5f8f93" stroke-width="1.2" fill="none"/><path d="M9.6 0.9 L14.6 5.3 L12.2 6.3 L10.6 9.6 L10.2 12.6 L2.3 6.6 L5.6 5.6 L8.6 3.4 Z" fill="#7fe3e1" stroke="#2b9b9e" stroke-width="1.1" stroke-linejoin="round"/></svg>
<svg class="ic" style="left:165.6px;top:767.2px" width="6" height="6" viewBox="0 0 6 6"><path d="M5.6 0.2 V5.6 H0.2 Z" fill="#3a3a3a"/></svg>
<div class="c b" style="left:177px;top:760.01px;width:258px">5 A1 Mobility</div>
<div class="c b" style="left:543px;top:760.01px;width:73px">28.13 days</div>
<div class="c bd" style="left:620px;top:760.01px;width:72px">Mon 16/12/24</div>
<div class="c bd" style="left:696px;top:760.01px;width:72px">Wed 25/12/24</div>
<div class="c num" style="left:23px;top:780.68px;width:33px">29</div>
<svg class="ic" style="left:61px;top:782.7px" width="10" height="12.4" viewBox="0 0 11 13"><circle cx="5.5" cy="3.2" r="3" fill="#c83a54"/><path d="M0.6 12.4 L0.6 8.6 Q0.6 6.6 3 6.4 L5.5 8.6 L8 6.4 Q10.4 6.6 10.4 8.6 L10.4 12.4 Z" fill="#c4314b"/></svg>
<svg class="ic" style="left:97px;top:785.5px" width="16" height="12" viewBox="0 0 16 12"><rect x="0.5" y="0.5" width="12.4" height="6" rx="0.6" fill="#74ade8" stroke="#4f94da" stroke-width="1"/><path d="M9 4.8 L12 4.8 L12 6.4" fill="none" stroke="#fff" stroke-width="1.5"/><path d="M5.2 8.6 L14 8.6 M11.4 6 L14.2 8.6 L11.4 11.2" fill="none" stroke="#3b3b3b" stroke-width="1.2"/></svg>

<div class="c " style="left:195px;top:780.68px;width:240px">Get Participants Declaration Signed</div>
<div class="c" style="left:543px;top:780.68px;width:73px">1 day</div>
<div class="c" style="left:620px;top:780.68px;width:72px">Mon 16/12/24</div>
<div class="c" style="left:696px;top:780.68px;width:72px">Mon 16/12/24</div>
<div class="c" style="left:772px;top:780.68px;width:60px">27</div>
<div class="c" style="left:836px;top:780.68px;width:92.8px">Event Coordinator</div>
<div class="c" style="left:935px;top:780.68px;width:112px">37</div>
<div class="c num" style="left:23px;top:801.34px;width:33px">30</div>
<svg class="ic" style="left:97px;top:806.1px" width="16" height="12" viewBox="0 0 16 12"><rect x="0.5" y="0.5" width="12.4" height="6" rx="0.6" fill="#74ade8" stroke="#4f94da" stroke-width="1"/><path d="M9 4.8 L12 4.8 L12 6.4" fill="none" stroke="#fff" stroke-width="1.5"/><path d="M5.2 8.6 L14 8.6 M11.4 6 L14.2 8.6 L11.4 11.2" fill="none" stroke="#3b3b3b" stroke-width="1.2"/></svg>

<div class="c " style="left:195px;top:801.34px;width:240px">Review Participants Declaration Signed</div>
<div class="c" style="left:543px;top:801.34px;width:73px">1 day</div>
<div class="c" style="left:620px;top:801.34px;width:72px">Mon 16/12/24</div>
<div class="c" style="left:696px;top:801.34px;width:72px">Mon 16/12/24</div>
<div class="c" style="left:772px;top:801.34px;width:60px">27</div>
<div class="c" style="left:836px;top:801.34px;width:92.8px">Project Manger</div>
<div class="c" style="left:935px;top:801.34px;width:112px">37</div>
<div class="c num" style="left:23px;top:822.01px;width:33px">31</div>
<svg class="ic" style="left:61px;top:824.0px" width="10" height="12.4" viewBox="0 0 11 13"><circle cx="5.5" cy="3.2" r="3" fill="#c83a54"/><path d="M0.6 12.4 L0.6 8.6 Q0.6 6.6 3 6.4 L5.5 8.6 L8 6.4 Q10.4 6.6 10.4 8.6 L10.4 12.4 Z" fill="#c4314b"/></svg>
<svg class="ic" style="left:97px;top:826.8px" width="16" height="12" viewBox="0 0 16 12"><rect x="0.5" y="0.5" width="12.4" height="6" rx="0.6" fill="#74ade8" stroke="#4f94da" stroke-width="1"/><path d="M9 4.8 L12 4.8 L12 6.4" fill="none" stroke="#fff" stroke-width="1.5"/><path d="M5.2 8.6 L14 8.6 M11.4 6 L14.2 8.6 L11.4 11.2" fill="none" stroke="#3b3b3b" stroke-width="1.2"/></svg>

<div class="c " style="left:195px;top:822.01px;width:240px">Generate Youthpasses</div>
<div class="c" style="left:543px;top:822.01px;width:73px">1 day</div>
<div class="c" style="left:620px;top:822.01px;width:72px">Mon 16/12/24</div>
<div class="c" style="left:696px;top:822.01px;width:72px">Mon 16/12/24</div>
<div class="c" style="left:772px;top:822.01px;width:60px">27</div>
<div class="c" style="left:836px;top:822.01px;width:92.8px">Event Coordinator</div>
<div class="c" style="left:935px;top:822.01px;width:112px">37</div>
<div class="c num" style="left:23px;top:842.68px;width:33px">32</div>
<svg class="ic" style="left:61px;top:844.7px" width="10" height="12.4" viewBox="0 0 11 13"><circle cx="5.5" cy="3.2" r="3" fill="#c83a54"/><path d="M0.6 12.4 L0.6 8.6 Q0.6 6.6 3 6.4 L5.5 8.6 L8 6.4 Q10.4 6.6 10.4 8.6 L10.4 12.4 Z" fill="#c4314b"/></svg>
<svg class="ic" style="left:97px;top:847.5px" width="16" height="12" viewBox="0 0 16 12"><rect x="0.5" y="0.5" width="12.4" height="6" rx="0.6" fill="#74ade8" stroke="#4f94da" stroke-width="1"/><path d="M9 4.8 L12 4.8 L12 6.4" fill="none" stroke="#fff" stroke-width="1.5"/><path d="M5.2 8.6 L14 8.6 M11.4 6 L14.2 8.6 L11.4 11.2" fill="none" stroke="#3b3b3b" stroke-width="1.2"/></svg>

<div class="c " style="left:195px;top:842.68px;width:240px">Present Projects and E29</div>
<div class="c" style="left:543px;top:842.68px;width:73px">1 day</div>
<div class="c" style="left:620px;top:842.68px;width:72px">Mon 16/12/24</div>
<div class="c" style="left:696px;top:842.68px;width:72px">Mon 16/12/24</div>
<div class="c" style="left:772px;top:842.68px;width:60px">27</div>
<div class="c" style="left:836px;top:842.68px;width:92.8px">Event Coordinator</div>
<div class="c" style="left:935px;top:842.68px;width:112px">37</div>
<div class="c num" style="left:23px;top:863.34px;width:33px">33</div>
<svg class="ic" style="left:61px;top:865.3px" width="10" height="12.4" viewBox="0 0 11 13"><circle cx="5.5" cy="3.2" r="3" fill="#c83a54"/><path d="M0.6 12.4 L0.6 8.6 Q0.6 6.6 3 6.4 L5.5 8.6 L8 6.4 Q10.4 6.6 10.4 8.6 L10.4 12.4 Z" fill="#c4314b"/></svg>
<svg class="ic" style="left:97px;top:868.1px" width="16" height="12" viewBox="0 0 16 12"><rect x="0.5" y="0.5" width="12.4" height="6" rx="0.6" fill="#74ade8" stroke="#4f94da" stroke-width="1"/><path d="M9 4.8 L12 4.8 L12 6.4" fill="none" stroke="#fff" stroke-width="1.5"/><path d="M5.2 8.6 L14 8.6 M11.4 6 L14.2 8.6 L11.4 11.2" fill="none" stroke="#3b3b3b" stroke-width="1.2"/></svg>

<div class="c " style="left:195px;top:863.34px;width:240px">Get dissemination plans</div>
<div class="c" style="left:543px;top:863.34px;width:73px">1 day</div>
<div class="c" style="left:620px;top:863.34px;width:72px">Mon 16/12/24</div>
<div class="c" style="left:696px;top:863.34px;width:72px">Mon 16/12/24</div>
<div class="c" style="left:772px;top:863.34px;width:60px">27</div>
<div class="c" style="left:836px;top:863.34px;width:92.8px">Event Coordinator</div>
<div class="c" style="left:935px;top:863.34px;width:112px">37</div>
<div class="c num" style="left:23px;top:884.01px;width:33px">34</div>
<svg class="ic" style="left:61px;top:886.0px" width="10" height="12.4" viewBox="0 0 11 13"><circle cx="5.5" cy="3.2" r="3" fill="#c83a54"/><path d="M0.6 12.4 L0.6 8.6 Q0.6 6.6 3 6.4 L5.5 8.6 L8 6.4 Q10.4 6.6 10.4 8.6 L10.4 12.4 Z" fill="#c4314b"/></svg>
<svg class="ic" style="left:97px;top:888.8px" width="16" height="12" viewBox="0 0 16 12"><rect x="0.5" y="0.5" width="12.4" height="6" rx="0.6" fill="#74ade8" stroke="#4f94da" stroke-width="1"/><path d="M9 4.8 L12 4.8 L12 6.4" fill="none" stroke="#fff" stroke-width="1.5"/><path d="M5.2 8.6 L14 8.6 M11.4 6 L14.2 8.6 L11.4 11.2" fill="none" stroke="#3b3b3b" stroke-width="1.2"/></svg>

<div class="c " style="left:195px;top:884.01px;width:240px">Get activity evaluation</div>
<div class="c" style="left:543px;top:884.01px;width:73px">1 day</div>
<div class="c" style="left:620px;top:884.01px;width:72px">Mon 16/12/24</div>
<div class="c" style="left:696px;top:884.01px;width:72px">Mon 16/12/24</div>
<div class="c" style="left:772px;top:884.01px;width:60px">27</div>
<div class="c" style="left:836px;top:884.01px;width:92.8px">Event Coordinator</div>
<div class="c" style="left:935px;top:884.01px;width:112px">37</div>
<div class="c num" style="left:23px;top:904.68px;width:33px">35</div>
<svg class="ic" style="left:61px;top:906.7px" width="10" height="12.4" viewBox="0 0 11 13"><circle cx="5.5" cy="3.2" r="3" fill="#c83a54"/><path d="M0.6 12.4 L0.6 8.6 Q0.6 6.6 3 6.4 L5.5 8.6 L8 6.4 Q10.4 6.6 10.4 8.6 L10.4 12.4 Z" fill="#c4314b"/></svg>
<svg class="ic" style="left:97px;top:909.5px" width="16" height="12" viewBox="0 0 16 12"><rect x="0.5" y="0.5" width="12.4" height="6" rx="0.6" fill="#74ade8" stroke="#4f94da" stroke-width="1"/><path d="M9 4.8 L12 4.8 L12 6.4" fill="none" stroke="#fff" stroke-width="1.5"/><path d="M5.2 8.6 L14 8.6 M11.4 6 L14.2 8.6 L11.4 11.2" fill="none" stroke="#3b3b3b" stroke-width="1.2"/></svg>

<div class="c " style="left:195px;top:904.68px;width:240px">Import participants to BM</div>
<div class="c" style="left:543px;top:904.68px;width:73px">1 day</div>
<div class="c" style="left:620px;top:904.68px;width:72px">Mon 16/12/24</div>
<div class="c" style="left:696px;top:904.68px;width:72px">Mon 16/12/24</div>
<div class="c" style="left:772px;top:904.68px;width:60px">27</div>
<div class="c" style="left:836px;top:904.68px;width:92.8px">Event Coordinator</div>
<div class="c" style="left:935px;top:904.68px;width:112px">37</div>
<div class="c num" style="left:23px;top:925.35px;width:33px">36</div>
<svg class="ic" style="left:61px;top:927.3px" width="10" height="12.4" viewBox="0 0 11 13"><circle cx="5.5" cy="3.2" r="3" fill="#c83a54"/><path d="M0.6 12.4 L0.6 8.6 Q0.6 6.6 3 6.4 L5.5 8.6 L8 6.4 Q10.4 6.6 10.4 8.6 L10.4 12.4 Z" fill="#c4314b"/></svg>
<svg class="ic" style="left:97px;top:930.1px" width="16" height="12" viewBox="0 0 16 12"><rect x="0.5" y="0.5" width="12.4" height="6" rx="0.6" fill="#74ade8" stroke="#4f94da" stroke-width="1"/><path d="M9 4.8 L12 4.8 L12 6.4" fill="none" stroke="#fff" stroke-width="1.5"/><path d="M5.2 8.6 L14 8.6 M11.4 6 L14.2 8.6 L11.4 11.2" fill="none" stroke="#3b3b3b" stroke-width="1.2"/></svg>

<div class="c " style="left:195px;top:925.35px;width:240px">Evaluate participants</div>
<div class="c" style="left:543px;top:925.35px;width:73px">1 day</div>
<div class="c" style="left:620px;top:925.35px;width:72px">Mon 16/12/24</div>
<div class="c" style="left:696px;top:925.35px;width:72px">Mon 16/12/24</div>
<div class="c" style="left:772px;top:925.35px;width:60px">27</div>
<div class="c" style="left:836px;top:925.35px;width:92.8px">Event Coordinator</div>
<div class="c" style="left:935px;top:925.35px;width:112px">37</div>
<div class="bg" style="left:146px;top:946.01px;width:290px;height:20.667px;background:#f0f0f0"></div>
<div class="c num" style="left:23px;top:946.01px;width:33px">37</div>
<svg class="ic" style="left:97px;top:950.8px" width="16" height="12" viewBox="0 0 16 12"><rect x="0.5" y="0.5" width="12.4" height="6" rx="0.6" fill="#74ade8" stroke="#4f94da" stroke-width="1"/><path d="M9 4.8 L12 4.8 L12 6.4" fill="none" stroke="#fff" stroke-width="1.5"/><path d="M5.2 8.6 L14 8.6 M11.4 6 L14.2 8.6 L11.4 11.2" fill="none" stroke="#3b3b3b" stroke-width="1.2"/></svg>

<div class="c i" style="left:195px;top:946.01px;width:240px">A1 Activity Complete</div>
<div class="c" style="left:543px;top:946.01px;width:73px">0 days</div>
<div class="c" style="left:620px;top:946.01px;width:72px">Mon 16/12/24</div>
<div class="c" style="left:696px;top:946.01px;width:72px">Mon 16/12/24</div>
<div class="c" style="left:772px;top:946.01px;width:60px">27,36,34,33,35</div>
<div class="c" style="left:935px;top:946.01px;width:112px">48,39,41,43,40,42,44</div>
<div class="bg" style="left:146px;top:966.68px;width:902px;height:20.667px;background:#d9e2f3"></div>
<div class="bg" style="left:94px;top:967.68px;width:52px;height:18.667px;background:#fff"></div>
<div class="c num" style="left:23px;top:966.68px;width:33px">38</div>
<svg class="ic" style="left:96px;top:968.9px" width="16" height="16" viewBox="0 0 16 16"><path d="M0.6 14.6 L5.2 10" stroke="#5f8f93" stroke-width="1.2" fill="none"/><path d="M9.6 0.9 L14.6 5.3 L12.2 6.3 L10.6 9.6 L10.2 12.6 L2.3 6.6 L5.6 5.6 L8.6 3.4 Z" fill="#7fe3e1" stroke="#2b9b9e" stroke-width="1.1" stroke-linejoin="round"/></svg>
<svg class="ic" style="left:165.6px;top:973.9px" width="6" height="6" viewBox="0 0 6 6"><path d="M5.6 0.2 V5.6 H0.2 Z" fill="#3a3a3a"/></svg>
<div class="c b" style="left:177px;top:966.68px;width:258px">6 A1 Follow-Up</div>
<div class="c b" style="left:543px;top:966.68px;width:73px">94.13 days</div>
<div class="c bd" style="left:620px;top:966.68px;width:72px">Tue 24/12/24</div>
<div class="c bd" style="left:696px;top:966.68px;width:72px">Fri 24/01/25</div>
<div class="c num" style="left:23px;top:987.35px;width:33px">39</div>
<svg class="ic" style="left:61px;top:989.3px" width="10" height="12.4" viewBox="0 0 11 13"><circle cx="5.5" cy="3.2" r="3" fill="#c83a54"/><path d="M0.6 12.4 L0.6 8.6 Q0.6 6.6 3 6.4 L5.5 8.6 L8 6.4 Q10.4 6.6 10.4 8.6 L10.4 12.4 Z" fill="#c4314b"/></svg>
<svg class="ic" style="left:97px;top:992.1px" width="16" height="12" viewBox="0 0 16 12"><rect x="0.5" y="0.5" width="12.4" height="6" rx="0.6" fill="#74ade8" stroke="#4f94da" stroke-width="1"/><path d="M9 4.8 L12 4.8 L12 6.4" fill="none" stroke="#fff" stroke-width="1.5"/><path d="M5.2 8.6 L14 8.6 M11.4 6 L14.2 8.6 L11.4 11.2" fill="none" stroke="#3b3b3b" stroke-width="1.2"/></svg>

<div class="c " style="left:192px;top:987.35px;width:243px">Report issues and changes</div>
<div class="c" style="left:543px;top:987.35px;width:73px">7 days</div>
<div class="c" style="left:620px;top:987.35px;width:72px">Tue 24/12/24</div>
<div class="c" style="left:696px;top:987.35px;width:72px">Thu 26/12/24</div>
<div class="c" style="left:772px;top:987.35px;width:60px">37</div>
<div class="c" style="left:836px;top:987.35px;width:92.8px">Event Coordinator</div>
<div class="c" style="left:935px;top:987.35px;width:112px">48</div>
<div class="c num" style="left:23px;top:1008.01px;width:33px">40</div>
<svg class="ic" style="left:61px;top:1010.0px" width="10" height="12.4" viewBox="0 0 11 13"><circle cx="5.5" cy="3.2" r="3" fill="#c83a54"/><path d="M0.6 12.4 L0.6 8.6 Q0.6 6.6 3 6.4 L5.5 8.6 L8 6.4 Q10.4 6.6 10.4 8.6 L10.4 12.4 Z" fill="#c4314b"/></svg>
<svg class="ic" style="left:97px;top:1012.8px" width="16" height="12" viewBox="0 0 16 12"><rect x="0.5" y="0.5" width="12.4" height="6" rx="0.6" fill="#74ade8" stroke="#4f94da" stroke-width="1"/><path d="M9 4.8 L12 4.8 L12 6.4" fill="none" stroke="#fff" stroke-width="1.5"/><path d="M5.2 8.6 L14 8.6 M11.4 6 L14.2 8.6 L11.4 11.2" fill="none" stroke="#3b3b3b" stroke-width="1.2"/></svg>

<div class="c " style="left:192px;top:1008.01px;width:243px">Refund deposits</div>
<div class="c" style="left:543px;top:1008.01px;width:73px">7 days</div>
<div class="c" style="left:620px;top:1008.01px;width:72px">Tue 24/12/24</div>
<div class="c" style="left:696px;top:1008.01px;width:72px">Thu 26/12/24</div>
<div class="c" style="left:772px;top:1008.01px;width:60px">37</div>
<div class="c" style="left:836px;top:1008.01px;width:92.8px">Project Manger</div>
<div class="c" style="left:935px;top:1008.01px;width:112px">48</div>
<div class="bg" style="left:146px;top:1028.68px;width:290px;height:20.667px;background:#ffe08f"></div>
<div class="c num" style="left:23px;top:1028.68px;width:33px">41</div>
<svg class="ic" style="left:59.6px;top:1032.1px" width="14" height="14" viewBox="0 0 14 14"><path d="M0.5 0.5 H13 V13 H4.6 L0.5 9 Z" fill="#f2cf8a"/><path d="M0.5 9 H4.6 V13 Z" fill="#fff6de"/></svg>
<svg class="ic" style="left:78px;top:1030.7px" width="10" height="12.4" viewBox="0 0 11 13"><circle cx="5.5" cy="3.2" r="3" fill="#c83a54"/><path d="M0.6 12.4 L0.6 8.6 Q0.6 6.6 3 6.4 L5.5 8.6 L8 6.4 Q10.4 6.6 10.4 8.6 L10.4 12.4 Z" fill="#c4314b"/></svg>
<svg class="ic" style="left:97px;top:1033.5px" width="16" height="12" viewBox="0 0 16 12"><rect x="0.5" y="0.5" width="12.4" height="6" rx="0.6" fill="#74ade8" stroke="#4f94da" stroke-width="1"/><path d="M9 4.8 L12 4.8 L12 6.4" fill="none" stroke="#fff" stroke-width="1.5"/><path d="M5.2 8.6 L14 8.6 M11.4 6 L14.2 8.6 L11.4 11.2" fill="none" stroke="#3b3b3b" stroke-width="1.2"/></svg>

<div class="c " style="left:192px;top:1028.68px;width:243px">Add outputs</div>
<div class="c" style="left:439px;top:1028.68px;width:100px"><span style="letter-spacing:0.22px">Photos, video, fli</span></div>
<div class="c" style="left:543px;top:1028.68px;width:73px">7 days</div>
<div class="c" style="left:620px;top:1028.68px;width:72px">Tue 24/12/24</div>
<div class="c" style="left:696px;top:1028.68px;width:72px">Thu 26/12/24</div>
<div class="c" style="left:772px;top:1028.68px;width:60px">37</div>
<div class="c" style="left:836px;top:1028.68px;width:92.8px">Event Coordinator</div>
<div class="c" style="left:935px;top:1028.68px;width:112px">48</div>
<div class="c num" style="left:23px;top:1049.35px;width:33px">42</div>
<svg class="ic" style="left:61px;top:1051.3px" width="10" height="12.4" viewBox="0 0 11 13"><circle cx="5.5" cy="3.2" r="3" fill="#c83a54"/><path d="M0.6 12.4 L0.6 8.6 Q0.6 6.6 3 6.4 L5.5 8.6 L8 6.4 Q10.4 6.6 10.4 8.6 L10.4 12.4 Z" fill="#c4314b"/></svg>
<svg class="ic" style="left:97px;top:1054.1px" width="16" height="12" viewBox="0 0 16 12"><rect x="0.5" y="0.5" width="12.4" height="6" rx="0.6" fill="#74ade8" stroke="#4f94da" stroke-width="1"/><path d="M9 4.8 L12 4.8 L12 6.4" fill="none" stroke="#fff" stroke-width="1.5"/><path d="M5.2 8.6 L14 8.6 M11.4 6 L14.2 8.6 L11.4 11.2" fill="none" stroke="#3b3b3b" stroke-width="1.2"/></svg>

<div class="c " style="left:192px;top:1049.35px;width:243px">Publish blogpost</div>
<div class="c" style="left:543px;top:1049.35px;width:73px">7 days</div>
<div class="c" style="left:620px;top:1049.35px;width:72px">Tue 24/12/24</div>
<div class="c" style="left:696px;top:1049.35px;width:72px">Thu 26/12/24</div>
<div class="c" style="left:772px;top:1049.35px;width:60px">37</div>
<div class="c" style="left:836px;top:1049.35px;width:92.8px">Event Coordinator</div>
<div class="c" style="left:935px;top:1049.35px;width:112px">48</div>
<div class="c num" style="left:23px;top:1070.01px;width:33px">43</div>
<svg class="ic" style="left:61px;top:1072.0px" width="10" height="12.4" viewBox="0 0 11 13"><circle cx="5.5" cy="3.2" r="3" fill="#c83a54"/><path d="M0.6 12.4 L0.6 8.6 Q0.6 6.6 3 6.4 L5.5 8.6 L8 6.4 Q10.4 6.6 10.4 8.6 L10.4 12.4 Z" fill="#c4314b"/></svg>
<svg class="ic" style="left:97px;top:1074.8px" width="16" height="12" viewBox="0 0 16 12"><rect x="0.5" y="0.5" width="12.4" height="6" rx="0.6" fill="#74ade8" stroke="#4f94da" stroke-width="1"/><path d="M9 4.8 L12 4.8 L12 6.4" fill="none" stroke="#fff" stroke-width="1.5"/><path d="M5.2 8.6 L14 8.6 M11.4 6 L14.2 8.6 L11.4 11.2" fill="none" stroke="#3b3b3b" stroke-width="1.2"/></svg>

<div class="c " style="left:192px;top:1070.01px;width:243px">Publish Activity Video</div>
<div class="c" style="left:543px;top:1070.01px;width:73px">7 days</div>
<div class="c" style="left:620px;top:1070.01px;width:72px">Tue 24/12/24</div>
<div class="c" style="left:696px;top:1070.01px;width:72px">Thu 26/12/24</div>
<div class="c" style="left:772px;top:1070.01px;width:60px">37</div>
<div class="c" style="left:836px;top:1070.01px;width:92.8px">Event Coordinator</div>
<div class="c" style="left:935px;top:1070.01px;width:112px">48</div>
<div class="c num" style="left:23px;top:1090.68px;width:33px">44</div>
<svg class="ic" style="left:61px;top:1092.7px" width="10" height="12.4" viewBox="0 0 11 13"><circle cx="5.5" cy="3.2" r="3" fill="#c83a54"/><path d="M0.6 12.4 L0.6 8.6 Q0.6 6.6 3 6.4 L5.5 8.6 L8 6.4 Q10.4 6.6 10.4 8.6 L10.4 12.4 Z" fill="#c4314b"/></svg>
<svg class="ic" style="left:97px;top:1095.5px" width="16" height="12" viewBox="0 0 16 12"><rect x="0.5" y="0.5" width="12.4" height="6" rx="0.6" fill="#74ade8" stroke="#4f94da" stroke-width="1"/><path d="M9 4.8 L12 4.8 L12 6.4" fill="none" stroke="#fff" stroke-width="1.5"/><path d="M5.2 8.6 L14 8.6 M11.4 6 L14.2 8.6 L11.4 11.2" fill="none" stroke="#3b3b3b" stroke-width="1.2"/></svg>

<div class="c " style="left:192px;top:1090.68px;width:243px">Get Participant Reports</div>
<div class="c" style="left:543px;top:1090.68px;width:73px">7 days</div>
<div class="c" style="left:620px;top:1090.68px;width:72px">Tue 24/12/24</div>
<div class="c" style="left:696px;top:1090.68px;width:72px">Thu 26/12/24</div>
<div class="c" style="left:772px;top:1090.68px;width:60px">37</div>
<div class="c" style="left:836px;top:1090.68px;width:92.8px">Event Coordinator</div>
<div class="c" style="left:935px;top:1090.68px;width:112px">48</div>
<div class="c num" style="left:23px;top:1111.35px;width:33px">45</div>
<svg class="ic" style="left:61px;top:1113.3px" width="10" height="12.4" viewBox="0 0 11 13"><circle cx="5.5" cy="3.2" r="3" fill="#c83a54"/><path d="M0.6 12.4 L0.6 8.6 Q0.6 6.6 3 6.4 L5.5 8.6 L8 6.4 Q10.4 6.6 10.4 8.6 L10.4 12.4 Z" fill="#c4314b"/></svg>
<svg class="ic" style="left:97px;top:1116.1px" width="16" height="12" viewBox="0 0 16 12"><rect x="0.5" y="0.5" width="12.4" height="6" rx="0.6" fill="#74ade8" stroke="#4f94da" stroke-width="1"/><path d="M9 4.8 L12 4.8 L12 6.4" fill="none" stroke="#fff" stroke-width="1.5"/><path d="M5.2 8.6 L14 8.6 M11.4 6 L14.2 8.6 L11.4 11.2" fill="none" stroke="#3b3b3b" stroke-width="1.2"/></svg>

<div class="c " style="left:192px;top:1111.35px;width:243px">Get Dissemination Reports</div>
<div class="c" style="left:543px;top:1111.35px;width:73px">7 days</div>
<div class="c" style="left:620px;top:1111.35px;width:72px">Tue 24/12/24</div>
<div class="c" style="left:696px;top:1111.35px;width:72px">Thu 26/12/24</div>
<div class="c" style="left:772px;top:1111.35px;width:60px">37</div>
<div class="c" style="left:836px;top:1111.35px;width:92.8px">Event Coordinator</div>
<div class="c" style="left:935px;top:1111.35px;width:112px">48</div>
<div class="hl" style="top:221.26999999999998px;left:23px;width:1139px;height:1.6px;background:#a9a9a9"></div>
<div class="hl" style="top:242.33px;left:23px;width:1139px"></div>
<div class="hl" style="top:263.0px;left:23px;width:1139px"></div>
<div class="hl" style="top:283.67px;left:23px;width:1139px"></div>
<div class="hl" style="top:304.34px;left:23px;width:1139px"></div>
<div class="hl" style="top:325.0px;left:23px;width:1139px"></div>
<div class="hl" style="top:345.67px;left:23px;width:1139px"></div>
<div class="hl" style="top:366.34px;left:23px;width:1139px"></div>
<div class="hl" style="top:387.0px;left:23px;width:1139px"></div>
<div class="hl" style="top:407.67px;left:23px;width:1139px"></div>
<div class="hl" style="top:428.34px;left:23px;width:1139px"></div>
<div class="hl" style="top:449.0px;left:23px;width:1139px"></div>
<div class="hl" style="top:469.67px;left:23px;width:1139px"></div>
<div class="hl" style="top:490.34px;left:23px;width:1139px"></div>
<div class="hl" style="top:511.0px;left:23px;width:1139px"></div>
<div class="hl" style="top:531.67px;left:23px;width:1139px"></div>
<div class="hl" style="top:552.34px;left:23px;width:1139px"></div>
<div class="hl" style="top:573.01px;left:23px;width:1139px"></div>
<div class="hl" style="top:593.67px;left:23px;width:1139px"></div>
<div class="hl" style="top:614.34px;left:23px;width:1139px"></div>
<div class="hl" style="top:635.01px;left:23px;width:1139px"></div>
<div class="hl" style="top:655.67px;left:23px;width:1139px"></div>
<div class="hl" style="top:676.34px;left:23px;width:1139px"></div>
<div class="hl" style="top:697.01px;left:23px;width:1139px"></div>
<div class="hl" style="top:717.68px;left:23px;width:1139px"></div>
<div class="hl" style="top:738.34px;left:23px;width:1139px"></div>
<div class="hl" style="top:759.01px;left:23px;width:1139px"></div>
<div class="hl" style="top:779.68px;left:23px;width:1139px"></div>
<div class="hl" style="top:800.34px;left:23px;width:1139px"></div>
<div class="hl" style="top:821.01px;left:23px;width:1139px"></div>
<div class="hl" style="top:841.68px;left:23px;width:1139px"></div>
<div class="hl" style="top:862.34px;left:23px;width:1139px"></div>
<div class="hl" style="top:883.01px;left:23px;width:1139px"></div>
<div class="hl" style="top:903.68px;left:23px;width:1139px"></div>
<div class="hl" style="top:924.35px;left:23px;width:1139px"></div>
<div class="hl" style="top:945.01px;left:23px;width:1139px"></div>
<div class="hl" style="top:965.68px;left:23px;width:1139px"></div>
<div class="hl" style="top:986.35px;left:23px;width:1139px"></div>
<div class="hl" style="top:1007.01px;left:23px;width:1139px"></div>
<div class="hl" style="top:1027.68px;left:23px;width:1139px"></div>
<div class="hl" style="top:1048.35px;left:23px;width:1139px"></div>
<div class="hl" style="top:1069.01px;left:23px;width:1139px"></div>
<div class="hl" style="top:1089.68px;left:23px;width:1139px"></div>
<div class="hl" style="top:1110.35px;left:23px;width:1139px"></div>
<div class="hl" style="top:1131.01px;left:23px;width:1139px"></div>
<div class="hl" style="top:1151.68px;left:23px;width:1139px"></div>
<div class="vl" style="left:55.5px;background:#c6c6c6"></div>
<div class="vl" style="left:92.5px;background:#dcdcdc"></div>
<div class="vl" style="left:145.5px;background:#dcdcdc"></div>
<div class="vl" style="left:435.5px;background:#dcdcdc"></div>
<div class="vl" style="left:539.5px;background:#dcdcdc"></div>
<div class="vl" style="left:616.5px;background:#dcdcdc"></div>
<div class="vl" style="left:692.5px;background:#dcdcdc"></div>
<div class="vl" style="left:768.5px;background:#dcdcdc"></div>
<div class="vl" style="left:832.5px;background:#dcdcdc"></div>
<div class="vl" style="left:931.5px;background:#dcdcdc"></div>
<div class="vl" style="left:1047.5px;background:#dcdcdc"></div>
<div style="position:absolute;left:55.4px;top:201.2px;width:39.2px;height:22.4px;border:2px solid #3b7a3e;background:#fff"></div>
<div class="bg" style="left:0;top:168px;width:23px;height:968px;background:#fff"></div>
<div class="bg" style="left:23px;top:168px;width:1139px;height:34px;background:#fff"></div>
<div class="bg" style="left:56.5px;top:168px;width:36.5px;height:34px;background:#a3d39c"></div>
<svg class="ic" style="left:66px;top:179px" width="17" height="17" viewBox="0 0 17 17"><circle cx="8.5" cy="8.5" r="7.2" fill="#fff" stroke="#2f7fd0" stroke-width="1.5"/><rect x="7.6" y="7.2" width="1.9" height="5.2" fill="#2f7fd0"/><circle cx="8.5" cy="4.9" r="1.2" fill="#2f7fd0"/></svg>
<div class="h " style="left:98px;top:172.6px">Task</div>
<div class="h " style="left:98px;top:186.6px">Mode</div>
<svg class="ic" style="left:133px;top:191px" width="8" height="5" viewBox="0 0 8 5"><path d="M0.3 0.5 H7.7 L4 4.6 Z" fill="#555"/></svg>
<div class="h " style="left:152px;top:184.6px">Task Name</div>
<svg class="ic" style="left:423px;top:191px" width="8" height="5" viewBox="0 0 8 5"><path d="M0.3 0.5 H7.7 L4 4.6 Z" fill="#555"/></svg>
<div class="h " style="left:441px;top:184.6px">Notes</div>
<svg class="ic" style="left:527px;top:191px" width="8" height="5" viewBox="0 0 8 5"><path d="M0.3 0.5 H7.7 L4 4.6 Z" fill="#555"/></svg>
<div class="h " style="left:546px;top:184.6px"><span style="letter-spacing:0.35px">Duration</span></div>
<svg class="ic" style="left:603px;top:191px" width="8" height="5" viewBox="0 0 8 5"><path d="M0.3 0.5 H7.7 L4 4.6 Z" fill="#555"/></svg>
<div class="h " style="left:622px;top:184.6px">Start</div>
<svg class="ic" style="left:679px;top:191px" width="8" height="5" viewBox="0 0 8 5"><path d="M0.3 0.5 H7.7 L4 4.6 Z" fill="#555"/></svg>
<div class="h " style="left:698px;top:184.6px">Finish</div>
<svg class="ic" style="left:755px;top:191px" width="8" height="5" viewBox="0 0 8 5"><path d="M0.3 0.5 H7.7 L4 4.6 Z" fill="#555"/></svg>
<div class="h " style="left:774px;top:184.6px"><span style="letter-spacing:-0.45px">Predeces</span></div>
<svg class="ic" style="left:821px;top:191px" width="8" height="5" viewBox="0 0 8 5"><path d="M0.3 0.5 H7.7 L4 4.6 Z" fill="#555"/></svg>
<div class="h " style="left:838px;top:172.6px"><span style="letter-spacing:-0.3px">Resource</span></div>
<div class="h " style="left:838px;top:186.6px">Names</div>
<svg class="ic" style="left:919px;top:191px" width="8" height="5" viewBox="0 0 8 5"><path d="M0.3 0.5 H7.7 L4 4.6 Z" fill="#555"/></svg>
<div class="h " style="left:937px;top:184.6px"><span style="letter-spacing:-0.3px">Successors</span></div>
<svg class="ic" style="left:1034px;top:191px" width="8" height="5" viewBox="0 0 8 5"><path d="M0.3 0.5 H7.7 L4 4.6 Z" fill="#555"/></svg>
<div class="h i" style="left:1054px;top:184.6px">Add New Column</div>
<svg class="ic" style="left:1149px;top:191px" width="8" height="5" viewBox="0 0 8 5"><path d="M0.3 0.5 H7.7 L4 4.6 Z" fill="#555"/></svg>
<div class="hl" style="top:201.4px;left:23px;width:1139px;background:#c6c6c6"></div>
<div class="bg" style="left:1167px;top:168px;width:738px;height:34px;background:#fff"></div>
<div class="ts" style="left:1206.1px;top:170.6px">Oct '24</div>
<div style="position:absolute;left:1200.0px;top:167.5px;width:1px;height:13px;background:#d6d6d6"></div>
<div class="ts" style="left:1339.2px;top:170.6px">Nov '24</div>
<div style="position:absolute;left:1333.1px;top:167.5px;width:1px;height:13px;background:#d6d6d6"></div>
<div class="ts" style="left:1468.0px;top:170.6px">Dec '24</div>
<div style="position:absolute;left:1461.9px;top:167.5px;width:1px;height:13px;background:#d6d6d6"></div>
<div class="ts" style="left:1601.1px;top:170.6px">Jan '25</div>
<div style="position:absolute;left:1595.0px;top:167.5px;width:1px;height:13px;background:#d6d6d6"></div>
<div class="ts" style="left:1734.1px;top:170.6px">Feb '25</div>
<div style="position:absolute;left:1728.0px;top:167.5px;width:1px;height:13px;background:#d6d6d6"></div>
<div class="ts" style="left:1854.3px;top:170.6px">Mar '25</div>
<div style="position:absolute;left:1848.2px;top:167.5px;width:1px;height:13px;background:#d6d6d6"></div>
<div class="ts" style="left:1175.8px;top:185.6px">23</div>
<div class="ts" style="left:1205.8px;top:185.6px">30</div>
<div style="position:absolute;left:1196.2px;top:189px;width:1px;height:13px;background:#dedede"></div>
<div class="ts" style="left:1235.9px;top:185.6px">07</div>
<div style="position:absolute;left:1226.3px;top:189px;width:1px;height:13px;background:#dedede"></div>
<div class="ts" style="left:1266.0px;top:185.6px">14</div>
<div style="position:absolute;left:1256.4px;top:189px;width:1px;height:13px;background:#dedede"></div>
<div class="ts" style="left:1296.0px;top:185.6px">21</div>
<div style="position:absolute;left:1286.4px;top:189px;width:1px;height:13px;background:#dedede"></div>
<div class="ts" style="left:1326.0px;top:185.6px">28</div>
<div style="position:absolute;left:1316.5px;top:189px;width:1px;height:13px;background:#dedede"></div>
<div class="ts" style="left:1356.1px;top:185.6px">04</div>
<div style="position:absolute;left:1346.5px;top:189px;width:1px;height:13px;background:#dedede"></div>
<div class="ts" style="left:1386.1px;top:185.6px">11</div>
<div style="position:absolute;left:1376.5px;top:189px;width:1px;height:13px;background:#dedede"></div>
<div class="ts" style="left:1416.2px;top:185.6px">18</div>
<div style="position:absolute;left:1406.6px;top:189px;width:1px;height:13px;background:#dedede"></div>
<div class="ts" style="left:1446.2px;top:185.6px">25</div>
<div style="position:absolute;left:1436.7px;top:189px;width:1px;height:13px;background:#dedede"></div>
<div class="ts" style="left:1476.3px;top:185.6px">02</div>
<div style="position:absolute;left:1466.7px;top:189px;width:1px;height:13px;background:#dedede"></div>
<div class="ts" style="left:1506.3px;top:185.6px">09</div>
<div style="position:absolute;left:1496.8px;top:189px;width:1px;height:13px;background:#dedede"></div>
<div class="ts" style="left:1536.4px;top:185.6px">16</div>
<div style="position:absolute;left:1526.8px;top:189px;width:1px;height:13px;background:#dedede"></div>
<div class="ts" style="left:1566.5px;top:185.6px">23</div>
<div style="position:absolute;left:1556.9px;top:189px;width:1px;height:13px;background:#dedede"></div>
<div class="ts" style="left:1596.5px;top:185.6px">30</div>
<div style="position:absolute;left:1586.9px;top:189px;width:1px;height:13px;background:#dedede"></div>
<div class="ts" style="left:1626.5px;top:185.6px">06</div>
<div style="position:absolute;left:1617.0px;top:189px;width:1px;height:13px;background:#dedede"></div>
<div class="ts" style="left:1656.6px;top:185.6px">13</div>
<div style="position:absolute;left:1647.0px;top:189px;width:1px;height:13px;background:#dedede"></div>
<div class="ts" style="left:1686.7px;top:185.6px">20</div>
<div style="position:absolute;left:1677.1px;top:189px;width:1px;height:13px;background:#dedede"></div>
<div class="ts" style="left:1716.7px;top:185.6px">27</div>
<div style="position:absolute;left:1707.1px;top:189px;width:1px;height:13px;background:#dedede"></div>
<div class="ts" style="left:1746.8px;top:185.6px">03</div>
<div style="position:absolute;left:1737.2px;top:189px;width:1px;height:13px;background:#dedede"></div>
<div class="ts" style="left:1776.8px;top:185.6px">10</div>
<div style="position:absolute;left:1767.2px;top:189px;width:1px;height:13px;background:#dedede"></div>
<div class="ts" style="left:1806.8px;top:185.6px">17</div>
<div style="position:absolute;left:1797.2px;top:189px;width:1px;height:13px;background:#dedede"></div>
<div class="ts" style="left:1836.9px;top:185.6px">24</div>
<div style="position:absolute;left:1827.3px;top:189px;width:1px;height:13px;background:#dedede"></div>
<div class="ts" style="left:1866.9px;top:185.6px">03</div>
<div style="position:absolute;left:1857.3px;top:189px;width:1px;height:13px;background:#dedede"></div>
<div class="ts" style="left:1897.0px;top:185.6px">10</div>
<div style="position:absolute;left:1887.4px;top:189px;width:1px;height:13px;background:#dedede"></div>
<div class="hl" style="top:201.6px;left:1167px;width:738px;background:#c6c6c6"></div>
<svg style="position:absolute;left:1167px;top:203px" width="738" height="917" viewBox="1167 203 738 917" font-family="Liberation Sans, sans-serif" font-size="12" font-weight="bold" fill="#1a1a1a"><rect x="1200.5" y="211.4" width="499" height="5.9" fill="#27a2ad"/>
<rect x="1167" y="222.1" width="738" height="1.3" fill="#b0b0b0"/>
<path d="M1199.4 238.2 V229.0 H1334.6 V238.2" fill="none" stroke="#4a4a4a" stroke-width="2.2"/>
<rect x="1200.4" y="232.6" width="21.6" height="5.6" fill="#27a2ad"/>
<rect x="1202.6" y="248.5" width="11.6" height="9.6" fill="#8ab9ec"/>
<rect x="1200.8" y="269.1" width="11.7" height="9.6" fill="#8ab9ec"/>
<rect x="1214.2" y="289.8" width="8.2" height="9.6" fill="#8ab9ec"/>
<rect x="1214.2" y="310.5" width="8.2" height="9.6" fill="#8ab9ec"/>
<rect x="1214.2" y="289.8" width="3.6" height="9.6" fill="#4a8fd8"/>
<rect x="1214.2" y="310.5" width="3" height="9.6" fill="#6aa4e2"/>
<path d="M1333.4 362.2 V353.6 H1463.2 V362.2" fill="none" stroke="#4a4a4a" stroke-width="2.2"/>
<rect x="1334" y="356.3" width="127.8" height="5.6" fill="#ee1111"/>
<rect x="1334.4" y="372.5" width="10.6" height="9.6" fill="#8ab9ec"/>
<rect x="1334.4" y="393.1" width="10.6" height="9.6" fill="#8ab9ec"/>
<rect x="1334.4" y="413.8" width="21.2" height="9.6" fill="#8ab9ec"/>
<rect x="1334.4" y="434.5" width="10.6" height="9.6" fill="#8ab9ec"/>
<rect x="1334.4" y="455.1" width="21.2" height="9.6" fill="#8ab9ec"/>
<path d="M1461.8 506.8 V497.6 H1527.6 V506.8" fill="none" stroke="#4a4a4a" stroke-width="2.2"/>
<rect x="1463.0" y="501.2" width="7.8" height="5.6" fill="#27a2ad"/>
<rect x="1463.0" y="517.1" width="7.8" height="9.6" fill="#8ab9ec"/>
<rect x="1463.0" y="537.8" width="7.8" height="9.6" fill="#8ab9ec"/>
<rect x="1463.0" y="558.5" width="7.8" height="9.6" fill="#8ab9ec"/>
<rect x="1463.0" y="579.1" width="4.2" height="9.6" fill="#8ab9ec"/>
<rect x="1463.0" y="599.8" width="4.2" height="9.6" fill="#8ab9ec"/>
<rect x="1463.0" y="620.5" width="4.2" height="9.6" fill="#8ab9ec"/>
<path d="M1461.8 672.2 V663.0 H1528.2 V672.2" fill="none" stroke="#4a4a4a" stroke-width="2.2"/>
<rect x="1471.6" y="666.6" width="8.2" height="5.6" fill="#27a2ad"/>
<rect x="1471.6" y="682.5" width="8.2" height="9.6" fill="#8ab9ec"/>
<rect x="1471.6" y="703.1" width="8.2" height="9.6" fill="#8ab9ec"/>
<rect x="1471.6" y="723.8" width="8.2" height="9.6" fill="#8ab9ec"/>
<path d="M1526.6 775.5 V766.3 H1570.0 V775.5" fill="none" stroke="#4a4a4a" stroke-width="2.2"/>
<rect x="1527.4" y="769.9" width="3.1" height="5.6" fill="#27a2ad"/>
<rect x="1528.0" y="785.8" width="2.6" height="9.6" fill="#8ab9ec"/>
<rect x="1528.0" y="806.5" width="2.6" height="9.6" fill="#8ab9ec"/>
<rect x="1528.0" y="827.1" width="2.6" height="9.6" fill="#8ab9ec"/>
<rect x="1528.0" y="847.8" width="2.6" height="9.6" fill="#8ab9ec"/>
<rect x="1528.0" y="868.5" width="2.6" height="9.6" fill="#8ab9ec"/>
<rect x="1528.0" y="889.1" width="2.6" height="9.6" fill="#8ab9ec"/>
<rect x="1528.0" y="909.8" width="2.6" height="9.6" fill="#8ab9ec"/>
<rect x="1528.0" y="930.5" width="2.6" height="9.6" fill="#8ab9ec"/>
<path d="M1560.6 982.2 V973.0 H1699.8 V982.2" fill="none" stroke="#4a4a4a" stroke-width="2.2"/>
<rect x="1561.6" y="976.6" width="11.3" height="5.6" fill="#27a2ad"/>
<rect x="1561.3" y="992.5" width="11.6" height="9.6" fill="#8ab9ec"/>
<rect x="1561.3" y="1013.1" width="11.6" height="9.6" fill="#8ab9ec"/>
<rect x="1561.3" y="1033.8" width="11.6" height="9.6" fill="#8ab9ec"/>
<rect x="1561.3" y="1054.5" width="11.6" height="9.6" fill="#8ab9ec"/>
<rect x="1561.3" y="1075.1" width="11.6" height="9.6" fill="#8ab9ec"/>
<rect x="1561.3" y="1095.8" width="11.6" height="9.6" fill="#8ab9ec"/>
<rect x="1561.3" y="1116.5" width="11.6" height="9.6" fill="#8ab9ec"/>
<path d="M1214.2 253.7 H1215.5 Q1217 253.7 1217 255.2 V286.0" fill="none" stroke="#3d85c8" stroke-width="1"/>
<path d="M1212.5 274.3 H1214.5 Q1216 274.3 1216 275.8 V306.7" fill="none" stroke="#3d85c8" stroke-width="1"/>
<path d="M1212.9 284.6 H1221.1 L1217.0 288.6 Z" fill="#3d85c8"/>
<path d="M1212.2 305.3 H1220.4 L1216.3 309.3 Z" fill="#3d85c8"/>
<path d="M1222.4 295.0 H1224 Q1225.5 295.0 1225.5 296.5 V328.3" fill="none" stroke="#3d85c8" stroke-width="1"/>
<path d="M1222.4 315.7 H1225.5" fill="none" stroke="#3d85c8" stroke-width="1"/>
<path d="M1221.4 327.1 H1229.6 L1225.5 331.1 Z" fill="#3d85c8"/>
<path d="M1226 335.8 H1453.5 Q1456.5 335.8 1456.5 338.8 V377.7" fill="none" stroke="#2b2b2b" stroke-width="1"/>
<path d="M1333.5 335.8 V451.3" fill="none" stroke="#2b2b2b" stroke-width="1"/>
<path d="M1345 377.5 H1455 Q1456.5 377.5 1456.5 379.0" fill="none" stroke="#3d85c8" stroke-width="1"/>
<path d="M1329.4 367.1 H1337.6 L1333.5 371.1 Z" fill="#2b2b2b"/>
<path d="M1345 398.1 H1455 Q1456.5 398.1 1456.5 399.6" fill="none" stroke="#3d85c8" stroke-width="1"/>
<path d="M1329.4 387.7 H1337.6 L1333.5 391.7 Z" fill="#2b2b2b"/>
<path d="M1355.6 418.8 H1455 Q1456.5 418.8 1456.5 420.3" fill="none" stroke="#3d85c8" stroke-width="1"/>
<path d="M1329.4 408.4 H1337.6 L1333.5 412.4 Z" fill="#2b2b2b"/>
<path d="M1345 439.5 H1455 Q1456.5 439.5 1456.5 441.0" fill="none" stroke="#3d85c8" stroke-width="1"/>
<path d="M1329.4 429.1 H1337.6 L1333.5 433.1 Z" fill="#2b2b2b"/>
<path d="M1355.6 460.1 H1455 Q1456.5 460.1 1456.5 461.6" fill="none" stroke="#3d85c8" stroke-width="1"/>
<path d="M1329.4 449.7 H1337.6 L1333.5 453.7 Z" fill="#2b2b2b"/>
<path d="M1456.5 377.7 V473.0" fill="none" stroke="#3d85c8" stroke-width="1"/>
<path d="M1452.7 472.0 H1460.9 L1456.8 476.0 Z" fill="#3d85c8"/>
<path d="M1465.5 482.0 V638.3" fill="none" stroke="#2b2b2b" stroke-width="1"/>
<path d="M1470.8 522.3 H1473 Q1474.5 522.3 1474.5 523.8" fill="none" stroke="#3d85c8" stroke-width="1"/>
<path d="M1470.8 543.0 H1473 Q1474.5 543.0 1474.5 544.5" fill="none" stroke="#3d85c8" stroke-width="1"/>
<path d="M1470.8 563.7 H1473 Q1474.5 563.7 1474.5 565.2" fill="none" stroke="#3d85c8" stroke-width="1"/>
<path d="M1467.2 584.3 H1468 Q1469.5 584.3 1469.5 585.8" fill="none" stroke="#3d85c8" stroke-width="1"/>
<path d="M1467.2 605.0 H1468 Q1469.5 605.0 1469.5 606.5" fill="none" stroke="#3d85c8" stroke-width="1"/>
<path d="M1467.2 625.7 H1468 Q1469.5 625.7 1469.5 627.2" fill="none" stroke="#3d85c8" stroke-width="1"/>
<path d="M1461.4 511.7 H1469.6 L1465.5 515.7 Z" fill="#2b2b2b"/>
<path d="M1461.4 532.4 H1469.6 L1465.5 536.4 Z" fill="#2b2b2b"/>
<path d="M1461.4 553.1 H1469.6 L1465.5 557.1 Z" fill="#2b2b2b"/>
<path d="M1461.4 573.7 H1469.6 L1465.5 577.7 Z" fill="#2b2b2b"/>
<path d="M1461.4 594.4 H1469.6 L1465.5 598.4 Z" fill="#2b2b2b"/>
<path d="M1461.4 615.1 H1469.6 L1465.5 619.1 Z" fill="#2b2b2b"/>
<path d="M1469.5 585.3 V638.3" fill="none" stroke="#3d85c8" stroke-width="1"/>
<path d="M1474.5 523.3 V638.3" fill="none" stroke="#3d85c8" stroke-width="1"/>
<path d="M1461.7 637.3 H1469.9 L1465.8 641.3 Z" fill="#2b2b2b"/>
<path d="M1465.7 637.3 H1473.9 L1469.8 641.3 Z" fill="#3d85c8"/>
<path d="M1470.4 637.3 H1478.6 L1474.5 641.3 Z" fill="#3d85c8"/>
<path d="M1474.5 648.3 V741.7" fill="none" stroke="#2b2b2b" stroke-width="1"/>
<path d="M1470.4 677.1 H1478.6 L1474.5 681.1 Z" fill="#2b2b2b"/>
<path d="M1479.8 687.7 H1482 Q1483.5 687.7 1483.5 689.2" fill="none" stroke="#3d85c8" stroke-width="1"/>
<path d="M1470.4 697.7 H1478.6 L1474.5 701.7 Z" fill="#2b2b2b"/>
<path d="M1479.8 708.3 H1482 Q1483.5 708.3 1483.5 709.8" fill="none" stroke="#3d85c8" stroke-width="1"/>
<path d="M1470.4 718.4 H1478.6 L1474.5 722.4 Z" fill="#2b2b2b"/>
<path d="M1479.8 729.0 H1482 Q1483.5 729.0 1483.5 730.5" fill="none" stroke="#3d85c8" stroke-width="1"/>
<path d="M1483.5 688.7 V741.7" fill="none" stroke="#3d85c8" stroke-width="1"/>
<path d="M1470.6 740.7 H1478.8 L1474.7 744.7 Z" fill="#2b2b2b"/>
<path d="M1479.2 740.7 H1487.4 L1483.3 744.7 Z" fill="#3d85c8"/>
<path d="M1484 750.2 H1524.5 Q1527.5 750.2 1527.5 753.2 V935.7" fill="none" stroke="#2b2b2b" stroke-width="1"/>
<path d="M1484 750.2 H1521.5 Q1524.5 750.2 1524.5 753.2 V948.3" fill="none" stroke="#2b2b2b" stroke-width="1"/>
<path d="M1522.9 780.4 H1531.1 L1527.0 784.4 Z" fill="#2b2b2b"/>
<path d="M1530.6 791.0 H1533.5" fill="none" stroke="#3d85c8" stroke-width="1"/>
<path d="M1522.9 801.1 H1531.1 L1527.0 805.1 Z" fill="#2b2b2b"/>
<path d="M1530.6 811.7 H1533.5" fill="none" stroke="#3d85c8" stroke-width="1"/>
<path d="M1522.9 821.7 H1531.1 L1527.0 825.7 Z" fill="#2b2b2b"/>
<path d="M1530.6 832.3 H1533.5" fill="none" stroke="#3d85c8" stroke-width="1"/>
<path d="M1522.9 842.4 H1531.1 L1527.0 846.4 Z" fill="#2b2b2b"/>
<path d="M1530.6 853.0 H1533.5" fill="none" stroke="#3d85c8" stroke-width="1"/>
<path d="M1522.9 863.1 H1531.1 L1527.0 867.1 Z" fill="#2b2b2b"/>
<path d="M1530.6 873.7 H1533.5" fill="none" stroke="#3d85c8" stroke-width="1"/>
<path d="M1522.9 883.7 H1531.1 L1527.0 887.7 Z" fill="#2b2b2b"/>
<path d="M1530.6 894.3 H1533.5" fill="none" stroke="#3d85c8" stroke-width="1"/>
<path d="M1522.9 904.4 H1531.1 L1527.0 908.4 Z" fill="#2b2b2b"/>
<path d="M1530.6 915.0 H1533.5" fill="none" stroke="#3d85c8" stroke-width="1"/>
<path d="M1522.9 925.1 H1531.1 L1527.0 929.1 Z" fill="#2b2b2b"/>
<path d="M1530.6 935.7 H1533.5" fill="none" stroke="#3d85c8" stroke-width="1"/>
<path d="M1533.5 791.0 V948.3" fill="none" stroke="#3d85c8" stroke-width="1"/>
<path d="M1519.9 947.7 H1528.1 L1524.0 951.7 Z" fill="#2b2b2b"/>
<path d="M1529.4 947.7 H1537.6 L1533.5 951.7 Z" fill="#3d85c8"/>
<path d="M1535 956.4 H1566.5 V1120" fill="none" stroke="#2b2b2b" stroke-width="1"/>
<path d="M1561.5 956.4 V1120" fill="none" stroke="#2b2b2b" stroke-width="1"/>
<path d="M1557.3 987.1 H1565.5 L1561.4 991.1 Z" fill="#2b2b2b"/>
<path d="M1572.9 997.7 H1575 Q1576.5 997.7 1576.5 999.2" fill="none" stroke="#3d85c8" stroke-width="1"/>
<path d="M1557.3 1007.7 H1565.5 L1561.4 1011.7 Z" fill="#2b2b2b"/>
<path d="M1572.9 1018.3 H1575 Q1576.5 1018.3 1576.5 1019.8" fill="none" stroke="#3d85c8" stroke-width="1"/>
<path d="M1557.3 1028.4 H1565.5 L1561.4 1032.4 Z" fill="#2b2b2b"/>
<path d="M1572.9 1039.0 H1575 Q1576.5 1039.0 1576.5 1040.5" fill="none" stroke="#3d85c8" stroke-width="1"/>
<path d="M1557.3 1049.1 H1565.5 L1561.4 1053.1 Z" fill="#2b2b2b"/>
<path d="M1572.9 1059.7 H1575 Q1576.5 1059.7 1576.5 1061.2" fill="none" stroke="#3d85c8" stroke-width="1"/>
<path d="M1557.3 1069.7 H1565.5 L1561.4 1073.7 Z" fill="#2b2b2b"/>
<path d="M1572.9 1080.3 H1575 Q1576.5 1080.3 1576.5 1081.8" fill="none" stroke="#3d85c8" stroke-width="1"/>
<path d="M1557.3 1090.4 H1565.5 L1561.4 1094.4 Z" fill="#2b2b2b"/>
<path d="M1572.9 1101.0 H1575 Q1576.5 1101.0 1576.5 1102.5" fill="none" stroke="#3d85c8" stroke-width="1"/>
<path d="M1557.3 1111.1 H1565.5 L1561.4 1115.1 Z" fill="#2b2b2b"/>
<path d="M1572.9 1121.7 H1575 Q1576.5 1121.7 1576.5 1123.2" fill="none" stroke="#3d85c8" stroke-width="1"/>
<path d="M1576.5 998.7 V1120" fill="none" stroke="#3d85c8" stroke-width="1"/>
<text x="1219.6" y="255.6">Back Office</text>
<text x="1217.8" y="276.2">Event Coordinator[10%],Back Office[10%],Project Manger[10%]</text>
<text x="1228.2" y="296.9">Event Coordinator[10%],Back Office[10%],Project Manger[10%]</text>
<text x="1228.2" y="317.6">Event Coordinator</text>
<path d="M1221.8 330.6 L1226.7 335.5 L1221.8 340.4 L1216.9 335.5 Z" fill="#555"/>
<text x="1233.0" y="338.7">06/10</text>
<text x="1352.0" y="379.7">Event Coordinator</text>
<text x="1352.0" y="400.3">Event Coordinator</text>
<text x="1362.0" y="421.0">Event Coordinator</text>
<text x="1352.0" y="441.7">Back Office</text>
<text x="1362.0" y="462.3">Event Coordinator</text>
<path d="M1462.2 475.6 L1467.1 480.5 L1462.2 485.4 L1457.3 480.5 Z" fill="#555"/>
<text x="1473.6" y="483.2">01/12</text>
<text x="1477.5" y="524.5">Event Coordinator</text>
<text x="1477.5" y="545.2">Event Coordinator</text>
<text x="1477.5" y="565.9">Event Coordinator</text>
<text x="1471.6" y="586.5">Back Office</text>
<text x="1471.6" y="607.2">Event Coordinator</text>
<text x="1471.6" y="627.9">Event Coordinator</text>
<path d="M1470.6 641.4 L1475.5 646.3 L1470.6 651.2 L1465.7 646.3 Z" fill="#555"/>
<text x="1482.0" y="648.5">03/12</text>
<text x="1486.0" y="689.9">Event Coordinator</text>
<text x="1486.0" y="710.5">Event Coordinator</text>
<text x="1486.0" y="731.2">Project Manger</text>
<path d="M1479.1 744.8 L1484.0 749.7 L1479.1 754.6 L1474.2 749.7 Z" fill="#555"/>
<text x="1491.0" y="751.9">05/12</text>
<text x="1536.5" y="793.6">Event Coordinator</text>
<text x="1536.5" y="814.3">Project Manger</text>
<text x="1536.5" y="834.9">Event Coordinator</text>
<text x="1536.5" y="855.6">Event Coordinator</text>
<text x="1536.5" y="876.3">Event Coordinator</text>
<text x="1536.5" y="896.9">Event Coordinator</text>
<text x="1536.5" y="917.6">Event Coordinator</text>
<text x="1536.5" y="938.3">Event Coordinator</text>
<path d="M1529.8 951.4 L1534.7 956.3 L1529.8 961.2 L1524.9 956.3 Z" fill="#555"/>
<text x="1542.3" y="958.5">16/12</text>
<text x="1578.8" y="999.9">Event Coordinator</text>
<text x="1578.8" y="1020.5">Project Manger</text>
<text x="1578.8" y="1041.2">Event Coordinator</text>
<text x="1578.8" y="1061.9">Event Coordinator</text>
<text x="1578.8" y="1082.5">Event Coordinator</text>
<text x="1578.8" y="1103.2">Event Coordinator</text>
<text x="1578.8" y="1123.9">Event Coordinator</text></svg>
<div style="position:absolute;left:-29.8px;top:644.5px;width:84px;height:14px;transform:rotate(-90deg);font-size:11.3px;color:#3d8f41;letter-spacing:0px;white-space:nowrap;text-align:center;line-height:14px">GANTT CHART</div>
<div class="bg" style="left:1162.8px;top:168px;width:4.2px;height:952px;background:#fff"></div>
<div class="bg" style="left:0px;top:1119.6px;width:1920px;height:17px;background:#f5f5f5"></div>
<div class="bg" style="left:0px;top:1119.6px;width:23px;height:17px;background:#fff"></div>
<svg class="ic" style="left:28px;top:1122.6px" width="7" height="10" viewBox="0 0 8 10"><path d="M7 0.5 V9.5 L0.5 5 Z" fill="#6a6a6a"/></svg>
<div class="bg" style="left:39.5px;top:1124px;width:1014px;height:7.8px;border-radius:4px;background:#6b6b6b"></div>
<svg class="ic" style="left:1151.6px;top:1122.6px" width="8" height="10" viewBox="0 0 8 10"><path d="M1 0.5 V9.5 L7.5 5 Z" fill="#6a6a6a"/></svg>
<svg class="ic" style="left:1171.6px;top:1122.6px" width="8" height="10" viewBox="0 0 8 10"><path d="M7 0.5 V9.5 L0.5 5 Z" fill="#6a6a6a"/></svg>
<div class="bg" style="left:1251px;top:1124px;width:208px;height:7.8px;border-radius:4px;background:#6b6b6b"></div>
<svg class="ic" style="left:1895px;top:1122.6px" width="8" height="10" viewBox="0 0 8 10"><path d="M1 0.5 V9.5 L7.5 5 Z" fill="#6a6a6a"/></svg>
<div class="bg" style="left:1162.3px;top:168px;width:1px;height:968px;background:#d2d2d2"></div>
<div class="bg" style="left:1166.3px;top:168px;width:1px;height:968px;background:#b4b4b4"></div>
<div class="bg" style="left:1905px;top:168px;width:15px;height:951.6px;background:#fff"></div>
<svg class="ic" style="left:1909.6px;top:170.4px" width="8.4" height="6.4" viewBox="0 0 10 8"><path d="M0.5 7 H9.5 L5 0.5 Z" fill="#6a6a6a"/></svg>
<div class="bg" style="left:1910px;top:182px;width:7.6px;height:281px;border-radius:4px;background:#6b6b6b"></div>
<svg class="ic" style="left:1909px;top:1103px" width="10" height="8" viewBox="0 0 10 8"><path d="M0.5 1 H9.5 L5 7.5 Z" fill="#6a6a6a"/></svg>
<div class="bg" style="left:1905px;top:1117.5px;width:15px;height:1.2px;background:#8a8a8a"></div>
<div class="bg" style="left:0;top:1136px;width:1920px;height:18px;background:#f3f3f3"></div>
<div class="t" style="left:11px;top:1139.5px;font-size:10.5px;color:#444">Ready</div>
<svg class="ic" style="left:70px;top:1138px" width="16" height="16" viewBox="0 0 16 16"><path d="M1 15 L5.6 10.4" stroke="#444" stroke-width="1.1" fill="none"/><path d="M9.4 1.6 L14.2 6 L12 6.8 L10.4 10 L10.2 12.6 L3 6.8 L6 6 L8.6 3.8 Z" fill="#fff" stroke="#444" stroke-width="1.1" stroke-linejoin="round"/></svg>
<div class="t" style="left:87px;top:1139.5px;font-size:10.5px;color:#333">New Tasks : Manually Scheduled</div>
<div class="bg" style="left:1606px;top:1137px;width:37px;height:17px;background:#dbdbdb"></div>
<svg class="ic" style="left:1617px;top:1138.6px" width="15" height="13" viewBox="0 0 15 13"><rect x="0.6" y="0.6" width="13.6" height="11.6" fill="#fff" stroke="#444" stroke-width="1.1"/><path d="M0.6 3.2 H14.2 M4.4 3.2 V12 M0.6 6 H4.4 M0.6 9 H4.4" stroke="#444" stroke-width="1"/><rect x="6" y="5" width="3" height="1.6" fill="#444"/><rect x="8" y="7.6" width="3" height="1.6" fill="#444"/><rect x="10" y="10" width="3" height="1.4" fill="#444"/></svg>
<svg class="ic" style="left:1654px;top:1138.6px" width="15" height="13" viewBox="0 0 15 13"><rect x="0.6" y="0.6" width="13.6" height="11.6" fill="#fff" stroke="#444" stroke-width="1.1"/><path d="M0.6 3.8 H14.2 M4.6 3.8 V12 M4.6 8 H14.2" stroke="#444" stroke-width="1"/></svg>
<svg class="ic" style="left:1692px;top:1138.6px" width="15" height="13" viewBox="0 0 15 13"><rect x="0.6" y="0.6" width="13.6" height="4" fill="#fff" stroke="#444" stroke-width="1.1"/><path d="M2 6.4 H6 M2 8.6 H6 M2 10.8 H6" stroke="#444" stroke-width="1" stroke-dasharray="1.4 1"/><circle cx="10" cy="7" r="1.6" fill="none" stroke="#444" stroke-width="1"/><path d="M7.4 12 Q7.4 9.4 10 9.4 Q12.6 9.4 12.6 12" fill="none" stroke="#444" stroke-width="1"/></svg>
<svg class="ic" style="left:1729px;top:1138.6px" width="15" height="13" viewBox="0 0 15 13"><rect x="0.6" y="0.6" width="13.6" height="8" fill="#fff" stroke="#444" stroke-width="1.1"/><path d="M5 0.6 V8.6 M9.6 0.6 V8.6 M0.6 4.4 H14.2" stroke="#444" stroke-width="1"/><circle cx="9.6" cy="8" r="1.6" fill="#fff" stroke="#444" stroke-width="1"/><path d="M7 12.6 Q7 10.2 9.6 10.2 Q12.2 10.2 12.2 12.6" fill="none" stroke="#444" stroke-width="1"/><path d="M1 10.6 H4 M1 12.4 H4" stroke="#444" stroke-width="0.9" stroke-dasharray="1.2 0.8"/></svg>
<svg class="ic" style="left:1767px;top:1137.6px" width="14" height="15" viewBox="0 0 14 15"><rect x="1.8" y="0.8" width="11" height="13.4" rx="1" fill="#fff" stroke="#444" stroke-width="1.2"/><path d="M0.4 3 H3 M0.4 12 H3" stroke="#444" stroke-width="1"/></svg>
<div class="bg" style="left:1799px;top:1145px;width:7px;height:1.2px;background:#444"></div>
<div class="bg" style="left:1811px;top:1145px;width:90px;height:1px;background:#8a8a8a"></div>
<div class="bg" style="left:1855.6px;top:1141.6px;width:4.8px;height:10.4px;background:#666"></div>
<svg class="ic" style="left:1907px;top:1141px" width="9" height="9" viewBox="0 0 9 9"><path d="M4.5 0.6 V8.4 M0.6 4.5 H8.4" stroke="#444" stroke-width="1.2"/></svg>
<div class="bg" style="left:0;top:0;width:1920px;height:168px;background:#e6e6e6"></div>
<svg class="ic" style="left:15px;top:15px" width="16" height="16" viewBox="0 0 16 16"><rect x="4.5" y="0.5" width="9" height="9" rx="1.5" fill="#33c481"/><rect x="6.5" y="4.5" width="9.5" height="10.5" rx="1.5" fill="#185c37"/><rect x="4.5" y="2.5" width="9" height="9" rx="1.2" fill="#21a366"/><rect x="0" y="3" width="9.6" height="9.6" rx="1.2" fill="#107c41"/><path d="M3.2 10.2 V5.4 H5.2 Q6.8 5.4 6.8 6.9 Q6.8 8.4 5.2 8.4 H3.4" fill="none" stroke="#fff" stroke-width="1.2"/></svg>
<svg class="ic" style="left:45px;top:14.5px" width="16" height="16" viewBox="0 0 16 16"><path d="M1 1 H12.6 L15 3.4 V15 H1 Z" fill="#e5a2ea" stroke="#a22ab0" stroke-width="1.4" stroke-linejoin="round"/><rect x="4" y="1.4" width="7.4" height="4.6" fill="#fff" stroke="#a22ab0" stroke-width="1.2"/><rect x="4" y="9.6" width="8" height="5.2" fill="#fff" stroke="#a22ab0" stroke-width="1.2"/></svg>
<svg class="ic" style="left:73px;top:14px" width="15" height="16" viewBox="0 0 15 16"><path d="M1.4 1.6 V6.6 H6.4" fill="none" stroke="#3a3a3a" stroke-width="1.3"/><path d="M1.8 6.4 Q5.4 1.2 10.2 3.2 Q14.6 5.6 12.6 10.2 Q11.2 13 6.8 15" fill="none" stroke="#3a3a3a" stroke-width="1.3"/></svg>
<svg class="ic" style="left:92.4px;top:19.4px" width="6" height="5" viewBox="0 0 6 5"><path d="M0.8 0.8 L3.0 3.8 L5.2 0.8" fill="none" stroke="#444" stroke-width="1.3"/></svg>
<svg class="ic" style="left:110px;top:14px" width="15" height="16" viewBox="0 0 15 16"><path d="M13.6 1.6 V6.6 H8.6" fill="none" stroke="#b9b9b9" stroke-width="1.3"/><path d="M13.2 6.4 Q9.6 1.2 4.8 3.2 Q0.4 5.6 2.4 10.2 Q3.8 13 8.2 15" fill="none" stroke="#b9b9b9" stroke-width="1.3"/></svg>
<svg class="ic" style="left:129.0px;top:19.4px" width="6" height="5" viewBox="0 0 6 5"><path d="M0.8 0.8 L3.0 3.8 L5.2 0.8" fill="none" stroke="#c4c4c4" stroke-width="1.3"/></svg>
<svg class="ic" style="left:148.5px;top:18.4px" width="8" height="8" viewBox="0 0 8 8"><path d="M0.6 0.8 H7.4" stroke="#444" stroke-width="1.3"/><path d="M0.8 3.6 L4 6.6 L7.2 3.6" fill="none" stroke="#444" stroke-width="1.3"/></svg>
<div class="t" style="left:172px;top:16px;font-size:11.1px;color:#333">23CC2-Project Template-KA1 Activity Process.mpp&nbsp; -&nbsp; Project Professional</div>
<div class="bg" style="left:1745px;top:4.6px;width:34px;height:34px;background:#d3d4d6"></div>
<div class="bg" style="left:1804px;top:21.5px;width:10px;height:1.2px;background:#333"></div>
<svg class="ic" style="left:1849.4px;top:17.6px" width="11" height="11" viewBox="0 0 11 11"><rect x="0.6" y="2.6" width="7" height="7" rx="1.2" fill="none" stroke="#333" stroke-width="1.1"/><path d="M2.8 2.4 V1.8 Q2.8 0.6 4 0.6 H8.2 Q9.6 0.6 9.6 2 V6.2 Q9.6 7.4 8.4 7.4 H7.8" fill="none" stroke="#333" stroke-width="1.1"/></svg>
<svg class="ic" style="left:1894px;top:17px" width="10" height="10" viewBox="0 0 10 10"><path d="M0.8 0.8 L9.2 9.2 M9.2 0.8 L0.8 9.2" stroke="#333" stroke-width="1.2"/></svg>
<svg class="ic" style="left:1851.5px;top:53px" width="11" height="11" viewBox="0 0 11 11"><rect x="0.6" y="2.6" width="7" height="7" rx="1.2" fill="none" stroke="#333" stroke-width="1.1"/><path d="M2.8 2.4 V1.8 Q2.8 0.6 4 0.6 H8.2 Q9.6 0.6 9.6 2 V6.2 Q9.6 7.4 8.4 7.4 H7.8" fill="none" stroke="#333" stroke-width="1.1"/></svg>
<svg class="ic" style="left:1895px;top:53.5px" width="10" height="10" viewBox="0 0 10 10"><path d="M0.8 0.8 L9.2 9.2 M9.2 0.8 L0.8 9.2" stroke="#333" stroke-width="1.2"/></svg>
<div class="t" style="left:20px;top:53px;font-size:12.4px;color:#333">File</div>
<div class="t" style="left:63px;top:53px;font-size:12.4px;color:#333">Task</div>
<div class="t" style="left:105px;top:53px;font-size:12.4px;color:#333">Resource</div>
<div class="t" style="left:174px;top:53px;font-size:12.4px;color:#333">Report</div>
<div class="t" style="left:231px;top:53px;font-size:12.4px;color:#333">Project</div>
<div class="t" style="left:288px;top:53px;font-size:12.4px;color:#333">View</div>
<div class="t" style="left:332px;top:53px;font-size:12.4px;color:#333">Help</div>
<div class="bg" style="left:63px;top:67.5px;width:25px;height:2px;background:#2e7d46;border-radius:1px"></div>
<div class="t" style="left:380px;top:53px;font-size:12px;color:#2e7d46">Gantt Chart Format</div>
<svg class="ic" style="left:521px;top:52px" width="15" height="15" viewBox="0 0 15 15"><circle cx="9" cy="6" r="4.6" fill="none" stroke="#444" stroke-width="1.2"/><path d="M5.6 9.4 L1 14" stroke="#444" stroke-width="1.3"/></svg>
<div class="t" style="left:548px;top:53px;font-size:12.4px;color:#555">Tell me what you want to do</div>
<div class="bg" style="left:8px;top:73px;width:1906px;height:94px;background:#fff;border-radius:8px;box-shadow:0 1px 2px rgba(0,0,0,0.14)"></div>
<div class="sep" style="left:67.5px"></div>
<div class="sep" style="left:228px"></div>
<div class="sep" style="left:394.5px"></div>
<div class="sep" style="left:659.5px"></div>
<div class="sep" style="left:911.5px"></div>
<div class="sep" style="left:1136.8px"></div>
<div class="sep" style="left:1328.5px"></div>
<div class="sep" style="left:1385.8px"></div>
<div class="sep" style="left:1517px"></div>
<div class="sep" style="left:775.5px;top:84px;height:57px"></div>
<div class="gl " style="left:39.5px;top:151px">View</div>
<div class="gl " style="left:147.8px;top:151px">Clipboard</div>
<div class="gl " style="left:304px;top:151px">Font</div>
<div class="gl " style="left:526.5px;top:151px">Schedule</div>
<div class="gl " style="left:785.4px;top:151px">Tasks</div>
<div class="gl " style="left:1024px;top:151px">Insert</div>
<div class="gl " style="left:1232px;top:151px">Properties</div>
<div class="gl " style="left:1356.7px;top:151px">Link To</div>
<div class="gl " style="left:1450.8px;top:151px">Editing</div>
<svg class="ic" style="left:25.5px;top:85px" width="28" height="21" viewBox="0 0 28 21"><rect x="0.7" y="0.7" width="26.6" height="19.6" fill="#fff" stroke="#666" stroke-width="1.4"/><path d="M0.7 5 H27.3" stroke="#666" stroke-width="1.2"/><path d="M6 5 V20 M0.7 10 H6 M0.7 15 H6" stroke="#777" stroke-width="1.1"/><rect x="6.6" y="5.6" width="20.2" height="14.2" fill="#e1effb"/><rect x="7.6" y="10.4" width="5" height="2.6" fill="#3f8fd6"/><rect x="14" y="13.4" width="5" height="2.6" fill="#3f8fd6"/><rect x="20.4" y="16" width="5" height="2.6" fill="#3f8fd6"/></svg>
<div class="rc " style="left:40px;top:113.4px">Gantt</div>
<div class="rc " style="left:35.6px;top:128.2px">Chart</div>
<svg class="ic" style="left:50.1px;top:133.2px" width="7" height="5" viewBox="0 0 7 5"><path d="M0.8 0.8 L3.5 3.8 L6.2 0.8" fill="none" stroke="#444" stroke-width="1.3"/></svg>
<svg class="ic" style="left:85px;top:82px" width="27" height="28" viewBox="0 0 27 28"><rect x="0.8" y="3.4" width="18" height="21.6" rx="1" fill="#ececec" stroke="#c6c6c6" stroke-width="1.2"/><path d="M6 3.6 Q6 0.8 9.8 0.8 Q13.6 0.8 13.6 3.6 L15 5.4 H4.6 Z" fill="#e4e4e4" stroke="#c6c6c6" stroke-width="1"/><rect x="12.6" y="11.6" width="13.4" height="15.6" fill="#f0f0f0" stroke="#c6c6c6" stroke-width="1.2"/></svg>
<div class="rc dis" style="left:95.6px;top:114px">Paste</div>
<svg class="ic" style="left:91.9px;top:133.2px" width="7" height="5" viewBox="0 0 7 5"><path d="M0.8 0.8 L3.5 3.8 L6.2 0.8" fill="none" stroke="#c0c0c0" stroke-width="1.3"/></svg>
<svg class="ic" style="left:122px;top:81px" width="13" height="16" viewBox="0 0 13 16"><path d="M3.4 0.8 L8.8 11.4 M9.6 0.8 L4.2 11.4" stroke="#444" stroke-width="1.2" fill="none"/><circle cx="3" cy="13" r="1.9" fill="none" stroke="#2f86d6" stroke-width="1.2"/><circle cx="10" cy="13" r="1.9" fill="none" stroke="#2f86d6" stroke-width="1.2"/></svg>
<div class="rl " style="left:139.6px;top:82.6px">Cut</div>
<svg class="ic" style="left:120.6px;top:105px" width="16" height="16" viewBox="0 0 16 16"><path d="M5 12.2 H1 V0.8 H6.6 L8.4 2.6" fill="none" stroke="#444" stroke-width="1.2"/><path d="M5.6 4.6 H11 L14.6 8 V15 H5.6 Z" fill="#fff" stroke="#444" stroke-width="1.2" stroke-linejoin="round"/><path d="M8 10.4 H12 M8 12.6 H12" stroke="#666" stroke-width="1"/></svg>
<div class="rl " style="left:139.6px;top:106.6px">Copy</div>
<svg class="ic" style="left:182.1px;top:111.2px" width="7" height="5" viewBox="0 0 7 5"><path d="M0.8 0.8 L3.5 3.8 L6.2 0.8" fill="none" stroke="#444" stroke-width="1.3"/></svg>
<svg class="ic" style="left:121px;top:129.6px" width="16" height="15" viewBox="0 0 16 15"><path d="M10.4 4.6 L13.6 0.8 L15 2 L12.4 6" fill="#777" stroke="#444" stroke-width="1"/><path d="M7 3.6 L12.8 8.4 L11.4 10 L5.4 5.4 Z" fill="#888" stroke="#444" stroke-width="0.9"/><path d="M5 5.6 L11 10.4 L7 14.4 L0.8 9.6 Z" fill="#f4b860" stroke="#e0902a" stroke-width="1"/></svg>
<div class="rl " style="left:139.6px;top:131.2px"><span style="letter-spacing:-0.2px">Format Painter</span></div>
<div class="bg" style="left:237px;top:85.5px;width:88px;height:21px;border:1px solid #c4c4c4;border-radius:4px;background:#fff"></div>
<div class="rl " style="left:240px;top:89px">Calibri</div>
<svg class="ic" style="left:315.6px;top:94.2px" width="6" height="5" viewBox="0 0 6 5"><path d="M0.8 0.8 L3.0 3.8 L5.2 0.8" fill="none" stroke="#444" stroke-width="1.3"/></svg>
<div class="bg" style="left:328.5px;top:85.5px;width:59px;height:21px;border:1px solid #c4c4c4;border-radius:4px;background:#fff"></div>
<div class="rl " style="left:331.4px;top:89px">11</div>
<svg class="ic" style="left:378.0px;top:94.2px" width="6" height="5" viewBox="0 0 6 5"><path d="M0.8 0.8 L3.0 3.8 L5.2 0.8" fill="none" stroke="#444" stroke-width="1.3"/></svg>
<div class="bg" style="left:237px;top:115.4px;width:22.4px;height:21.6px;border:1px solid #b9b9b9;border-radius:3.5px;background:#e9e9e9"></div>
<div class="rc" style="left:248.2px;top:118.6px;font-weight:bold;font-size:12.4px">B</div>
<div class="rc" style="left:272px;top:118.6px;font-style:italic;font-family:'Liberation Serif',serif;font-size:14px">I</div>
<div class="rc" style="left:295.8px;top:118.6px;font-size:12.4px;text-decoration:underline;text-underline-offset:2px">U</div>
<div class="sep" style="left:310px;top:115px;height:21px"></div>
<svg class="ic" style="left:316px;top:116px" width="16" height="19" viewBox="0 0 16 19"><path d="M4 8.4 L8.4 3.4 L12.6 8 L8 12.4 Z" fill="#fff" stroke="#444" stroke-width="1.1" stroke-linejoin="round"/><path d="M8.4 3.4 L6.6 1.2" stroke="#444" stroke-width="1"/><path d="M13 7.6 Q15 10.2 13.6 11.6 Q12.4 10.4 13 7.6 Z" fill="#2f86d6" stroke="#2f86d6" stroke-width="0.8"/><rect x="0.4" y="14.6" width="15" height="3.4" fill="#f4e61c"/></svg>
<svg class="ic" style="left:337.6px;top:123.8px" width="6" height="5" viewBox="0 0 6 5"><path d="M0.8 0.8 L3.0 3.8 L5.2 0.8" fill="none" stroke="#444" stroke-width="1.3"/></svg>
<svg class="ic" style="left:355px;top:116px" width="16" height="19" viewBox="0 0 16 19"><path d="M3.4 12.4 L7.6 1.6 L11.8 12.4 M4.8 8.6 H10.4" fill="none" stroke="#444" stroke-width="1.3"/><rect x="0.4" y="14.6" width="14.6" height="3.4" fill="#e0202a"/></svg>
<svg class="ic" style="left:376.8px;top:123.8px" width="6" height="5" viewBox="0 0 6 5"><path d="M0.8 0.8 L3.0 3.8 L5.2 0.8" fill="none" stroke="#444" stroke-width="1.3"/></svg>
<svg class="ic" style="left:383.6px;top:154.6px" width="7" height="7" viewBox="0 0 7 7"><path d="M0.6 2.6 V0.6 H2.6 M6.4 3 V6.4 H3 M3 3 L6 6" fill="none" stroke="#555" stroke-width="1"/></svg>
<svg class="ic" style="left:406.4px;top:88.8px" width="16" height="8" viewBox="0 0 16 8"><rect x="0.6" y="0.6" width="14" height="6.4" rx="0.6" fill="#fff" stroke="#555" stroke-width="1.1"/></svg>
<div class="abs" style="left:414.0px;top:97.6px;font-size:5.6px;color:#888;transform:translateX(-50%);line-height:6px;position:absolute">0%</div>
<svg class="ic" style="left:430.6px;top:88.8px" width="16" height="8" viewBox="0 0 16 8"><rect x="0.6" y="0.6" width="14" height="6.4" rx="0.6" fill="#fff" stroke="#555" stroke-width="1.1"/><rect x="1.6" y="3" width="3.0" height="1.8" fill="#2f86d6"/></svg>
<div class="abs" style="left:438.20000000000005px;top:97.6px;font-size:5.6px;color:#888;transform:translateX(-50%);line-height:6px;position:absolute">25%</div>
<svg class="ic" style="left:455px;top:88.8px" width="16" height="8" viewBox="0 0 16 8"><rect x="0.6" y="0.6" width="14" height="6.4" rx="0.6" fill="#fff" stroke="#555" stroke-width="1.1"/><rect x="1.6" y="3" width="6.0" height="1.8" fill="#2f86d6"/></svg>
<div class="abs" style="left:462.6px;top:97.6px;font-size:5.6px;color:#888;transform:translateX(-50%);line-height:6px;position:absolute">50%</div>
<svg class="ic" style="left:479.6px;top:88.8px" width="16" height="8" viewBox="0 0 16 8"><rect x="0.6" y="0.6" width="14" height="6.4" rx="0.6" fill="#fff" stroke="#555" stroke-width="1.1"/><rect x="1.6" y="3" width="9.0" height="1.8" fill="#2f86d6"/></svg>
<div class="abs" style="left:487.20000000000005px;top:97.6px;font-size:5.6px;color:#888;transform:translateX(-50%);line-height:6px;position:absolute">75%</div>
<svg class="ic" style="left:503.6px;top:88.8px" width="16" height="8" viewBox="0 0 16 8"><rect x="0.6" y="0.6" width="14" height="6.4" rx="0.6" fill="#fff" stroke="#555" stroke-width="1.1"/><rect x="1.6" y="3" width="12.0" height="1.8" fill="#2f86d6"/></svg>
<div class="abs" style="left:511.20000000000005px;top:97.6px;font-size:5.6px;color:#888;transform:translateX(-50%);line-height:6px;position:absolute">100%</div>
<svg class="ic" style="left:406.4px;top:119px" width="15" height="14" viewBox="0 0 15 14"><path d="M0.6 1 H13.6 M0.6 5 H13.6 M0.6 9 H4 M0.6 13 H4" stroke="#555" stroke-width="1.2"/><path d="M13.8 11 H6.6 M9 8.6 L6.4 11 L9 13.4" fill="none" stroke="#2f86d6" stroke-width="1.2"/></svg>
<svg class="ic" style="left:431px;top:119px" width="15" height="14" viewBox="0 0 15 14"><path d="M1 1 H14 M1 5 H14 M10.6 9 H14 M10.6 13 H14" stroke="#555" stroke-width="1.2"/><path d="M0.6 11 H7.8 M5.4 8.6 L8 11 L5.4 13.4" fill="none" stroke="#2f86d6" stroke-width="1.2"/></svg>
<div class="sep" style="left:452px;top:115px;height:21px"></div>
<svg class="ic" style="left:458px;top:118px" width="15" height="16" viewBox="0 0 15 16"><rect x="0.8" y="4.4" width="4.6" height="7.2" fill="#79b0ea" stroke="#2f86d6" stroke-width="1.1"/><rect x="9.4" y="4.4" width="4.6" height="7.2" fill="#79b0ea" stroke="#2f86d6" stroke-width="1.1"/><path d="M7.4 0.6 V15.4" stroke="#555" stroke-width="1" stroke-dasharray="2 1.4"/><path d="M4.6 0.8 L5.8 2.8 M10.2 0.8 L9 2.8 M4.6 15.2 L5.8 13.2 M10.2 15.2 L9 13.2" stroke="#555" stroke-width="1"/></svg>
<div class="sep" style="left:479.4px;top:115px;height:21px"></div>
<svg class="ic" style="left:484.4px;top:120px" width="16" height="12" viewBox="0 0 16 12"><ellipse cx="5.4" cy="5" rx="4.6" ry="3.6" fill="none" stroke="#555" stroke-width="1.2"/><ellipse cx="10.4" cy="7" rx="4.6" ry="3.6" fill="none" stroke="#555" stroke-width="1.2"/></svg>
<svg class="ic" style="left:508.6px;top:117px" width="17" height="17" viewBox="0 0 17 17"><ellipse cx="5.6" cy="8" rx="4.4" ry="3.4" fill="none" stroke="#555" stroke-width="1.2"/><ellipse cx="11" cy="9.6" rx="4.4" ry="3.4" fill="none" stroke="#555" stroke-width="1.2"/><path d="M10.6 3.6 L12 0.8 M12.8 4.4 L15.6 2.6 M3 13 L1.4 15.6 M5.4 13.6 L5 16.4" stroke="#e0404a" stroke-width="1"/></svg>
<svg class="ic" style="left:532.6px;top:81.6px" width="15" height="15" viewBox="0 0 15 15"><rect x="0.7" y="0.7" width="12.6" height="3.6" fill="#79b0ea" stroke="#2f86d6" stroke-width="1.1"/><rect x="0.7" y="4.6" width="12.6" height="3.6" fill="#79b0ea" stroke="#2f86d6" stroke-width="1.1"/><path d="M5 11 H11 M8.8 8.8 L11.2 11 L8.8 13.4 M12.4 8.4 V14" fill="none" stroke="#444" stroke-width="1.2"/></svg>
<div class="rl " style="left:551.4px;top:82.6px"><span style="letter-spacing:-0.28px">Mark on Track</span></div>
<svg class="ic" style="left:637.1px;top:87.2px" width="7" height="5" viewBox="0 0 7 5"><path d="M0.8 0.8 L3.5 3.8 L6.2 0.8" fill="none" stroke="#444" stroke-width="1.3"/></svg>
<svg class="ic" style="left:532px;top:105.6px" width="16" height="15" viewBox="0 0 16 15"><ellipse cx="5" cy="4.4" rx="4.2" ry="3.2" fill="none" stroke="#555" stroke-width="1.2"/><ellipse cx="10" cy="6" rx="4.2" ry="3.2" fill="none" stroke="#555" stroke-width="1.2"/><path d="M5 10.2 L8 13 L13.6 7.8" fill="none" stroke="#3aa85a" stroke-width="1.5"/></svg>
<div class="rl " style="left:551.4px;top:106.6px"><span style="letter-spacing:-0.5px">Respect Links</span></div>
<svg class="ic" style="left:532.6px;top:133.6px" width="15" height="8" viewBox="0 0 15 8"><rect x="0.7" y="0.7" width="13" height="6.4" rx="0.8" fill="#f8dadd" stroke="#777" stroke-width="1.1"/><path d="M0.7 4 H13.7" stroke="#e0404a" stroke-width="1.2"/></svg>
<div class="rl " style="left:551.4px;top:131.2px"><span style="letter-spacing:-0.12px">Inactivate</span></div>
<div class="bg" style="left:667.5px;top:77.4px;width:50px;height:70.4px;border:1px solid #b9b9b9;border-radius:4px;background:#e9e9e9"></div>
<svg class="ic" style="left:679.4px;top:82.6px" width="26" height="26" viewBox="0 0 26 26"><path d="M1 24 L9 16" stroke="#6a8f92" stroke-width="1.5" fill="none"/><path d="M15.6 1.4 L24.2 9 L20.4 10.6 L17.6 16 L17 21 L3.8 11 L9.4 9.4 L14.2 5.6 Z" fill="#7fe3e1" stroke="#2b9b9e" stroke-width="1.4" stroke-linejoin="round"/></svg>
<div class="rc " style="left:692.2px;top:113.4px">Manually</div>
<div class="rc " style="left:692.2px;top:128.2px">Schedule</div>
<svg class="ic" style="left:731px;top:87.6px" width="29" height="23" viewBox="0 0 29 23"><rect x="0.7" y="0.7" width="25.6" height="12.6" rx="1" fill="#79b0ea" stroke="#3f8ad8" stroke-width="1.4"/><path d="M19 11.4 H24.4 V14" fill="none" stroke="#fff" stroke-width="2.4"/><path d="M13.6 17 H28 M23.6 12.6 L28 17 L23.6 21.4" fill="none" stroke="#555" stroke-width="1.3"/></svg>
<div class="rc " style="left:744.4px;top:113.4px">Auto</div>
<div class="rc " style="left:744.4px;top:128.2px">Schedule</div>
<svg class="ic" style="left:787.6px;top:87.6px" width="29" height="23" viewBox="0 0 29 23"><rect x="0.7" y="0.7" width="25.6" height="12.6" rx="1" fill="#79b0ea" stroke="#3f8ad8" stroke-width="1.4"/><path d="M20 9.4 L27.6 16 L20 22.4 L12.6 16 Z" fill="#fff" stroke="#e88a2a" stroke-width="1.4" stroke-linejoin="round"/><text x="20" y="19" font-size="7.6" text-anchor="middle" fill="#555" font-family="Liberation Sans">?</text></svg>
<div class="rc " style="left:801px;top:113.4px">Inspect</div>
<svg class="ic" style="left:797.3px;top:133.4px" width="7" height="5" viewBox="0 0 7 5"><path d="M0.8 0.8 L3.5 3.8 L6.2 0.8" fill="none" stroke="#444" stroke-width="1.3"/></svg>
<svg class="ic" style="left:830.4px;top:82px" width="29" height="28" viewBox="0 0 29 28"><rect x="0.7" y="3.6" width="25" height="21.6" fill="#fff" stroke="#555" stroke-width="1.3"/><path d="M0.7 8 H25.7 M5.6 0.6 V4.4 M20.6 0.6 V4.4" stroke="#555" stroke-width="1.2"/><circle cx="10" cy="13" r="1" fill="#444"/><path d="M14 21 H27.6 M23.4 16.8 L27.6 21 L23.4 25.4" fill="none" stroke="#2f86d6" stroke-width="1.4"/><path d="M13 21 H28.6" stroke="#fff" stroke-width="0"/></svg>
<div class="rc " style="left:844px;top:113.4px">Move</div>
<svg class="ic" style="left:840.3px;top:133.4px" width="7" height="5" viewBox="0 0 7 5"><path d="M0.8 0.8 L3.5 3.8 L6.2 0.8" fill="none" stroke="#444" stroke-width="1.3"/></svg>
<svg class="ic" style="left:872px;top:82px" width="29" height="28" viewBox="0 0 29 28"><rect x="0.7" y="0.7" width="25" height="24.6" fill="#fff" stroke="#555" stroke-width="1.3"/><rect x="0.7" y="0.7" width="25" height="3.4" fill="#888"/><path d="M0.7 9 H25.7 M0.7 14.4 H25.7 M0.7 19.8 H25.7 M9 4 V25 M17.4 4 V25" stroke="#555" stroke-width="1.1"/><rect x="18.6" y="12" width="10" height="16" fill="#fff"/><text x="23.6" y="26" font-size="16" text-anchor="middle" fill="#2f86d6" font-family="Liberation Sans">?</text></svg>
<div class="rc " style="left:884.6px;top:113.4px">Mode</div>
<svg class="ic" style="left:881.1px;top:133.4px" width="7" height="5" viewBox="0 0 7 5"><path d="M0.8 0.8 L3.5 3.8 L6.2 0.8" fill="none" stroke="#444" stroke-width="1.3"/></svg>
<svg class="ic" style="left:924.4px;top:80px" width="29" height="23" viewBox="0 0 29 23"><rect x="2" y="8" width="26" height="13.6" rx="0.8" fill="#79b0ea" stroke="#3f8ad8" stroke-width="1.3"/><path d="M6.6 0.4 V14 M0 6.6 H13.4" stroke="#fff" stroke-width="3"/><path d="M6.6 0.6 V13.6 M0.2 6.6 H13" stroke="#3aa85a" stroke-width="1.4"/></svg>
<div class="rc " style="left:939.2px;top:113.4px">Task</div>
<svg class="ic" style="left:935.5px;top:133.4px" width="7" height="5" viewBox="0 0 7 5"><path d="M0.8 0.8 L3.5 3.8 L6.2 0.8" fill="none" stroke="#444" stroke-width="1.3"/></svg>
<svg class="ic" style="left:972px;top:80px" width="29" height="23" viewBox="0 0 29 23"><path d="M2.6 21 V14 M17 8 H27.6 V21" fill="none" stroke="#555" stroke-width="1.4"/><path d="M6.6 0.6 V13.6 M0.2 6.6 H13" stroke="#3aa85a" stroke-width="1.4"/></svg>
<div class="rc " style="left:986.6px;top:113.4px">Summary</div>
<svg class="ic" style="left:1027px;top:80px" width="29" height="28" viewBox="0 0 29 28"><path d="M15 2.6 L27.4 15 L15 27 L3.6 15.6 M10.4 7.4 L15 2.6" fill="none" stroke="#666" stroke-width="1.4" stroke-linejoin="round"/><path d="M6.6 0.6 V13.6 M0.2 6.6 H13" stroke="#3aa85a" stroke-width="1.4"/></svg>
<div class="rc " style="left:1041.8px;top:113.4px">Milestone</div>
<svg class="ic" style="left:1085px;top:80px" width="27" height="28" viewBox="0 0 27 28"><path d="M4 9 L14 4 L25 9 V21 L14 27 L4 21 Z" fill="#eee" stroke="#c4c4c4" stroke-width="1.2" stroke-linejoin="round"/><path d="M4 9 L14 14 L25 9 M14 14 V27" fill="none" stroke="#c4c4c4" stroke-width="1.1"/><path d="M6.6 0.6 V12 M0.8 6.4 H12.4" stroke="#c9c9c9" stroke-width="1.3"/></svg>
<div class="rc dis" style="left:1099.6px;top:113.4px">Deliverable</div>
<svg class="ic" style="left:1095.9px;top:133.4px" width="7" height="5" viewBox="0 0 7 5"><path d="M0.8 0.8 L3.5 3.8 L6.2 0.8" fill="none" stroke="#c8c8c8" stroke-width="1.3"/></svg>
<svg class="ic" style="left:1163px;top:87.6px" width="30" height="24" viewBox="0 0 30 24"><rect x="0.7" y="0.7" width="25.6" height="12.6" rx="1" fill="#79b0ea" stroke="#3f8ad8" stroke-width="1.4"/><circle cx="21.6" cy="15.6" r="7" fill="#fff" stroke="#555" stroke-width="1.2"/><rect x="21" y="14.4" width="1.3" height="5" fill="#555"/><rect x="21" y="11.6" width="1.3" height="1.5" fill="#555"/></svg>
<div class="rc " style="left:1175.8px;top:113.4px">Information</div>
<svg class="ic" style="left:1215px;top:82.4px" width="14" height="13" viewBox="0 0 14 13"><path d="M0.7 0.7 H12.6 V8.4 L8.6 12.2 H0.7 Z" fill="#fff" stroke="#444" stroke-width="1.2" stroke-linejoin="round"/><path d="M12.6 8.4 H8.6 V12.2" fill="none" stroke="#444" stroke-width="1"/></svg>
<div class="rl " style="left:1233.4px;top:82.6px"><span style="letter-spacing:-0.25px">Notes</span></div>
<svg class="ic" style="left:1214.4px;top:106.4px" width="16" height="13" viewBox="0 0 16 13"><rect x="0.7" y="0.7" width="14.4" height="11.6" fill="#fff" stroke="#444" stroke-width="1.2"/><path d="M0.7 3.6 H15" stroke="#444" stroke-width="1.1"/><path d="M2.6 7 H6 M2.6 9.6 H6" stroke="#666" stroke-width="1"/><rect x="8" y="5.8" width="5" height="4.6" fill="none" stroke="#666" stroke-width="0.9"/><path d="M8 8 H13 M10.4 5.8 V10.4" stroke="#666" stroke-width="0.8"/></svg>
<div class="rl " style="left:1233.4px;top:106.6px"><span style="letter-spacing:-0.4px">Details</span></div>
<svg class="ic" style="left:1214.4px;top:129.6px" width="16" height="16" viewBox="0 0 16 16"><path d="M1.6 0.8 V3.4 H13.4 V0.8 M5.6 0.8 V2.4 M9.4 0.8 V2.4" fill="none" stroke="#555" stroke-width="1"/><rect x="2.8" y="5.6" width="9.6" height="2.6" fill="#666"/><rect x="6.6" y="10.6" width="9" height="3.6" fill="#2f86d6"/><path d="M3 9.6 V15 M0.4 12.4 H5.8" stroke="#3aa85a" stroke-width="1.2"/></svg>
<div class="rl " style="left:1233.4px;top:131.2px">Add to Timeline</div>
<svg class="ic" style="left:1345px;top:81.6px" width="24" height="27" viewBox="0 0 24 27"><path d="M0.8 0.8 H22.8 V14.4 H15.4 V20.4 H8.2 V26.2 H0.8 Z" fill="#fff" stroke="#3a9a66" stroke-width="1.2" stroke-linejoin="round"/><path d="M8.2 0.8 V20.4 M15.4 0.8 V14.4 M0.8 10.6 H8.2 M8.2 8 H15.4 M8.2 14.4 H15.4" fill="none" stroke="#3a9a66" stroke-width="1.1"/></svg>
<div class="rc " style="left:1356.7px;top:113.4px">Planner</div>
<svg class="ic" style="left:1400px;top:87.6px" width="29" height="24" viewBox="0 0 29 24"><rect x="0.7" y="0.7" width="25.6" height="12.6" rx="1" fill="#79b0ea" stroke="#3f8ad8" stroke-width="1.4"/><path d="M16.6 5.4 V20 L19.8 17 L22 22.2 L24.2 21.2 L22 16.2 L26.4 16 Z" fill="#fff" stroke="#444" stroke-width="1.1" stroke-linejoin="round"/></svg>
<div class="rc " style="left:1413px;top:113.4px">Scroll</div>
<div class="rc " style="left:1413px;top:128.2px">to Task</div>
<svg class="ic" style="left:1439.6px;top:81.6px" width="15" height="15" viewBox="0 0 15 15"><circle cx="9" cy="5.6" r="4.6" fill="none" stroke="#444" stroke-width="1.2"/><path d="M5.6 9 L0.8 13.8" stroke="#444" stroke-width="1.3"/></svg>
<div class="rl " style="left:1457.6px;top:82.6px"><span style="letter-spacing:-0.3px">Find</span></div>
<svg class="ic" style="left:1494.9px;top:87.2px" width="7" height="5" viewBox="0 0 7 5"><path d="M0.8 0.8 L3.5 3.8 L6.2 0.8" fill="none" stroke="#444" stroke-width="1.3"/></svg>
<svg class="ic" style="left:1438.8px;top:105.6px" width="16" height="15" viewBox="0 0 16 15"><path d="M6.4 13.6 L1 8.4 L9 1 L14.6 6.4 L7.6 13.6 Z" fill="#f3d2f6" stroke="#b146c2" stroke-width="1.3" stroke-linejoin="round"/><path d="M4.6 5 L10.4 10.8" stroke="#b146c2" stroke-width="1.2"/></svg>
<div class="rl " style="left:1457.6px;top:106.6px"><span style="letter-spacing:-0.2px">Clear</span></div>
<svg class="ic" style="left:1485.5px;top:111.2px" width="7" height="5" viewBox="0 0 7 5"><path d="M0.8 0.8 L3.5 3.8 L6.2 0.8" fill="none" stroke="#444" stroke-width="1.3"/></svg>
<svg class="ic" style="left:1439.4px;top:130.6px" width="16" height="14" viewBox="0 0 16 14"><rect x="0.7" y="0.7" width="14.2" height="12.4" fill="#fff" stroke="#444" stroke-width="1.2"/><path d="M0.7 3.6 H15" stroke="#444" stroke-width="1"/><path d="M7.8 5.4 V11 M5.4 8.8 L7.8 11.2 L10.2 8.8" fill="none" stroke="#2f86d6" stroke-width="1.3"/></svg>
<div class="rl " style="left:1457.6px;top:131.2px">Fill</div>
<svg class="ic" style="left:1474.1px;top:135.8px" width="7" height="5" viewBox="0 0 7 5"><path d="M0.8 0.8 L3.5 3.8 L6.2 0.8" fill="none" stroke="#444" stroke-width="1.3"/></svg>
<svg class="ic" style="left:1895.5px;top:152.2px" width="9" height="5" viewBox="0 0 9 5"><path d="M0.8 0.8 L4.5 3.8 L8.2 0.8" fill="none" stroke="#444" stroke-width="1.3"/></svg>
</body></html>
